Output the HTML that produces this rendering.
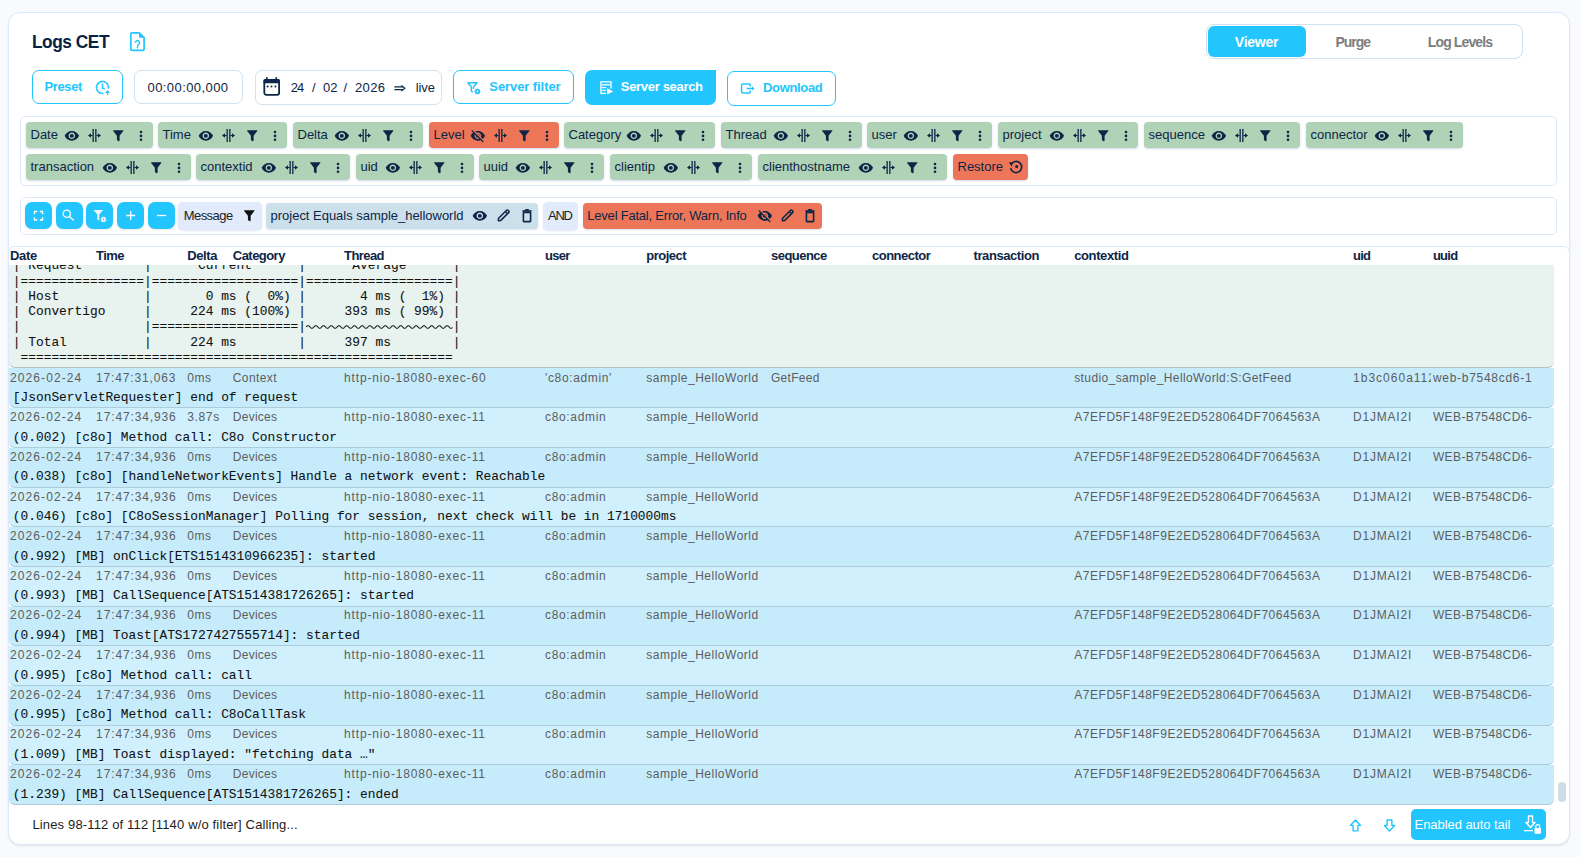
<!DOCTYPE html><html><head><meta charset="utf-8"><style>*{box-sizing:border-box;margin:0;padding:0}html,body{width:1581px;height:857px;overflow:hidden;background:#f9fafd;font-family:"Liberation Sans",sans-serif}svg{display:block}</style></head><body><div style="position:absolute;left:8px;top:12px;width:1562px;height:833px;background:#fff;border:1px solid #dce8fb;border-radius:12px;box-shadow:0 1px 2px rgba(0,0,0,.09)"></div>
<span style="position:absolute;left:31.80px;top:32.42px;font-family:'Liberation Sans',sans-serif;font-weight:bold;font-size:19px;line-height:19px;color:#0b2142;white-space:pre;letter-spacing:-0.500px;transform:scaleX(0.91);transform-origin:0 0;">Logs CET</span>
<svg style="position:absolute;left:129px;top:31px" width="17" height="21" viewBox="0 0 17 21"><path d="M3 1.9h7.3l4.8 4.8V18.1a1.2 1.2 0 0 1-1.2 1.2H3a1.2 1.2 0 0 1-1.2-1.2V3.1A1.2 1.2 0 0 1 3 1.9z" fill="none" stroke="#22c5fd" stroke-width="1.7"/><path d="M10 1.2v4.6a1 1 0 0 0 1 1h4.6z" fill="#22c5fd"/><path d="M6.4 11.7a2.1 2.1 0 1 1 3.3 1.7c-.7.5-1.2 1-1.2 1.9" fill="none" stroke="#22c5fd" stroke-width="1.4"/><circle cx="8.5" cy="16.5" r=".9" fill="#22c5fd"/></svg>
<div style="position:absolute;left:1206px;top:24px;width:317px;height:35px;border:1px solid #cfe1ee;border-radius:8px;background:#fff"></div>
<div style="position:absolute;left:1208px;top:26px;width:98px;height:31px;background:#22c5fd;border-radius:6px"></div>
<span style="position:absolute;left:1234.80px;top:34.75px;font-family:'Liberation Sans',sans-serif;font-weight:bold;font-size:14px;line-height:14px;color:#ffffff;white-space:pre;letter-spacing:-0.245px;">Viewer</span>
<span style="position:absolute;left:1335.40px;top:34.75px;font-family:'Liberation Sans',sans-serif;font-weight:bold;font-size:14px;line-height:14px;color:#7d7d7d;white-space:pre;letter-spacing:-1.022px;">Purge</span>
<span style="position:absolute;left:1427.80px;top:34.75px;font-family:'Liberation Sans',sans-serif;font-weight:bold;font-size:14px;line-height:14px;color:#7d7d7d;white-space:pre;letter-spacing:-0.872px;">Log Levels</span>
<div style="position:absolute;left:32px;top:70px;width:91px;height:34px;border:1.5px solid #22c5fd;border-radius:7px"></div>
<span style="position:absolute;left:44.40px;top:80.00px;font-family:'Liberation Sans',sans-serif;font-weight:bold;font-size:13px;line-height:13px;color:#22c5fd;white-space:pre;letter-spacing:-0.342px;">Preset</span>
<svg style="position:absolute;left:90px;top:75px" width="25" height="25" viewBox="0 0 25 25"><path d="M18.4 13.6A6 6 0 1 0 13.4 18.4" fill="none" stroke="#22c5fd" stroke-width="1.7" stroke-dasharray="3.2 0.3"/><path d="M12.5 9.2V13l1.8 .9" fill="none" stroke="#22c5fd" stroke-width="1.5" stroke-linecap="round"/><path d="M15 17.9L17.5 15.1L20 17.9z" fill="#22c5fd"/><rect x="16.9" y="17" width="1.3" height="3" fill="#22c5fd"/></svg>
<div style="position:absolute;left:134px;top:70px;width:109px;height:34px;border:1px solid #d2e2ee;border-radius:7px"></div>
<span style="position:absolute;left:147.50px;top:81.00px;font-family:'Liberation Sans',sans-serif;font-weight:normal;font-size:13px;line-height:13px;color:#0d2546;white-space:pre;letter-spacing:0.425px;">00:00:00,000</span>
<div style="position:absolute;left:255px;top:70px;width:187px;height:35px;border:1px solid #d2e2ee;border-radius:7px"></div>
<svg style="position:absolute;left:259px;top:74px" width="25" height="25" viewBox="0 0 25 25"><rect x="5.3" y="6" width="14.8" height="14.8" rx="2" fill="none" stroke="#0d2546" stroke-width="1.8"/><rect x="4.4" y="5.1" width="16.5" height="4.2" rx="1.5" fill="#0d2546"/><rect x="6.9" y="3.2" width="1.7" height="3" fill="#0d2546"/><rect x="16.4" y="3.2" width="1.7" height="3" fill="#0d2546"/><circle cx="8.6" cy="12.4" r="1" fill="#0d2546"/><circle cx="12.5" cy="12.4" r="1" fill="#0d2546"/><circle cx="16.4" cy="12.4" r="1" fill="#0d2546"/></svg>
<span style="position:absolute;left:290.70px;top:81.00px;font-family:'Liberation Sans',sans-serif;font-weight:normal;font-size:13px;line-height:13px;color:#0d2546;white-space:pre;letter-spacing:-1.000px;">24</span>
<span style="position:absolute;left:312.00px;top:81.00px;font-family:'Liberation Sans',sans-serif;font-weight:normal;font-size:13px;line-height:13px;color:#0d2546;white-space:pre;">/</span>
<span style="position:absolute;left:323.00px;top:81.00px;font-family:'Liberation Sans',sans-serif;font-weight:normal;font-size:13px;line-height:13px;color:#0d2546;white-space:pre;">02</span>
<span style="position:absolute;left:343.60px;top:81.00px;font-family:'Liberation Sans',sans-serif;font-weight:normal;font-size:13px;line-height:13px;color:#0d2546;white-space:pre;">/</span>
<span style="position:absolute;left:355.00px;top:81.00px;font-family:'Liberation Sans',sans-serif;font-weight:normal;font-size:13px;line-height:13px;color:#0d2546;white-space:pre;letter-spacing:0.333px;">2026</span>
<span style="position:absolute;left:415.70px;top:81.00px;font-family:'Liberation Sans',sans-serif;font-weight:normal;font-size:13px;line-height:13px;color:#0d2546;white-space:pre;letter-spacing:-0.067px;">live</span>
<svg style="position:absolute;left:393px;top:83px" width="13" height="11" viewBox="0 0 13 11"><path d="M1.3 3.9H10M1.3 6.6H10" stroke="#0d2546" stroke-width="1.1"/><path d="M8.4 2.4L11.8 5.25L8.4 8.1" fill="none" stroke="#0d2546" stroke-width="1.15"/></svg>
<div style="position:absolute;left:453px;top:70px;width:121px;height:34px;border:1.5px solid #22c5fd;border-radius:7px"></div>
<svg style="position:absolute;left:462px;top:76px" width="25" height="25" viewBox="0 0 25 25"><path d="M5.6 6.7H15.1L11.5 10.7V12.9M5.6 6.7L9.4 10.7V15.3L10.7 16.4" fill="none" stroke="#22c5fd" stroke-width="1.45" stroke-linejoin="round"/><polygon points="18.80,15.50 17.76,16.44 17.83,17.83 16.44,17.76 15.50,18.80 14.56,17.76 13.17,17.83 13.24,16.44 12.20,15.50 13.24,14.56 13.17,13.17 14.56,13.24 15.50,12.20 16.44,13.24 17.83,13.17 17.76,14.56" fill="#22c5fd"/><circle cx="15.5" cy="15.5" r="2.3" fill="#22c5fd"/><circle cx="15.5" cy="15.5" r=".9" fill="#fff"/></svg>
<span style="position:absolute;left:489.30px;top:79.80px;font-family:'Liberation Sans',sans-serif;font-weight:bold;font-size:13px;line-height:13px;color:#22c5fd;white-space:pre;letter-spacing:-0.081px;">Server filter</span>
<div style="position:absolute;left:585px;top:70px;width:131px;height:35px;background:#22c5fd;border-radius:7px 0 7px 7px"></div>
<svg style="position:absolute;left:594px;top:76px" width="25" height="25" viewBox="0 0 25 25"><path d="M17 12.5V5.9H6.9V17.3H12" fill="none" stroke="#fff" stroke-width="1.3"/><rect x="7.8" y="8" width="8" height="1.6" fill="#d8f3ff"/><rect x="7.8" y="11" width="4.2" height="1.1" fill="#fff"/><rect x="7.8" y="13.8" width="4.2" height="1.1" fill="#fff"/><path d="M13 12.3L19.2 15.4L13 18.6z" fill="#fff"/></svg>
<span style="position:absolute;left:620.80px;top:80.00px;font-family:'Liberation Sans',sans-serif;font-weight:bold;font-size:13px;line-height:13px;color:#ffffff;white-space:pre;letter-spacing:-0.316px;">Server search</span>
<div style="position:absolute;left:727px;top:71px;width:109px;height:35px;border:1.5px solid #22c5fd;border-radius:7px"></div>
<svg style="position:absolute;left:735px;top:76px" width="25" height="25" viewBox="0 0 25 25"><path d="M15.3 10.4V9.2A1.3 1.3 0 0 0 14 7.9H7.9A1.3 1.3 0 0 0 6.6 9.2V15.8A1.3 1.3 0 0 0 7.9 17.1H14A1.3 1.3 0 0 0 15.3 15.8V14.6" fill="none" stroke="#22c5fd" stroke-width="1.5"/><path d="M11.5 12.5H17.5" stroke="#22c5fd" stroke-width="1.5"/><path d="M17 10.6L19.6 12.5L17 14.4z" fill="#22c5fd"/></svg>
<span style="position:absolute;left:763.00px;top:81.00px;font-family:'Liberation Sans',sans-serif;font-weight:bold;font-size:13px;line-height:13px;color:#22c5fd;white-space:pre;letter-spacing:-0.332px;">Download</span>
<div style="position:absolute;left:20px;top:116px;width:1537px;height:70px;border:1px solid #dce8fb;border-radius:5px"></div>
<div style="position:absolute;left:26px;top:122px;width:127px;height:26px;background:#b0d2b6;border-radius:4px;box-shadow:0 1px 2px rgba(130,150,210,.35)"></div>
<span style="position:absolute;left:30.50px;top:128.10px;font-family:'Liberation Sans',sans-serif;font-weight:normal;font-size:13px;line-height:13px;color:#0d2546;white-space:pre;">Date</span>
<svg style="position:absolute;left:64.35px;top:127.85px;overflow:visible" width="15.71" height="15.71" viewBox="0 0 24 24"><path d="M12 4.5C7 4.5 2.73 7.61 1 12c1.73 4.39 6 7.5 11 7.5s9.27-3.11 11-7.5c-1.73-4.39-6-7.5-11-7.5zM12 17c-2.76 0-5-2.24-5-5s2.24-5 5-5 5 2.240 5 5-2.24 5-5 5zm0-8c-1.66 0-3 1.34-3 3s1.34 3 3 3 3-1.34 3-3-1.34-3-3-3z" fill="#0d2546"/></svg>
<svg style="position:absolute;left:88.2px;top:129.2px" width="13" height="13" viewBox="0 0 13 13"><rect x="4.5" y="0" width="1.3" height="13" fill="#0d2546"/><rect x="7.2" y="0" width="1.3" height="13" fill="#0d2546"/><path d="M0 6.5L3 4.3V8.7z M13 6.5L10 4.3V8.7z" fill="#0d2546"/><rect x="2.5" y="5.95" width="2" height="1.1" fill="#0d2546"/><rect x="8.5" y="5.95" width="2" height="1.1" fill="#0d2546"/></svg>
<svg style="position:absolute;left:112.85px;top:130.00px;overflow:visible" width="10.5" height="11.4" viewBox="0 0 10.5 11.4"><path d="M0.3 0.3H10.2Q10.6 0.5 10.3 1L6.6 5.8V10.2Q6.6 11.4 5.6 11.2L4.2 10.2Q3.9 9.8 3.9 9.4V5.8L0.2 1Q-0.1 0.5 0.3 0.3z" fill="#0d2546"/></svg>
<svg style="position:absolute;left:138.7px;top:129.8px" width="4" height="12" viewBox="0 0 4 12"><circle cx="2" cy="2.00" r="1.3" fill="#0d2546"/><circle cx="2" cy="5.90" r="1.3" fill="#0d2546"/><circle cx="2" cy="9.80" r="1.3" fill="#0d2546"/></svg>
<div style="position:absolute;left:158px;top:122px;width:129px;height:26px;background:#b0d2b6;border-radius:4px;box-shadow:0 1px 2px rgba(130,150,210,.35)"></div>
<span style="position:absolute;left:162.50px;top:128.10px;font-family:'Liberation Sans',sans-serif;font-weight:normal;font-size:13px;line-height:13px;color:#0d2546;white-space:pre;">Time</span>
<svg style="position:absolute;left:198.35px;top:127.85px;overflow:visible" width="15.71" height="15.71" viewBox="0 0 24 24"><path d="M12 4.5C7 4.5 2.73 7.61 1 12c1.73 4.39 6 7.5 11 7.5s9.27-3.11 11-7.5c-1.73-4.39-6-7.5-11-7.5zM12 17c-2.76 0-5-2.24-5-5s2.24-5 5-5 5 2.240 5 5-2.24 5-5 5zm0-8c-1.66 0-3 1.34-3 3s1.34 3 3 3 3-1.34 3-3-1.34-3-3-3z" fill="#0d2546"/></svg>
<svg style="position:absolute;left:222.2px;top:129.2px" width="13" height="13" viewBox="0 0 13 13"><rect x="4.5" y="0" width="1.3" height="13" fill="#0d2546"/><rect x="7.2" y="0" width="1.3" height="13" fill="#0d2546"/><path d="M0 6.5L3 4.3V8.7z M13 6.5L10 4.3V8.7z" fill="#0d2546"/><rect x="2.5" y="5.95" width="2" height="1.1" fill="#0d2546"/><rect x="8.5" y="5.95" width="2" height="1.1" fill="#0d2546"/></svg>
<svg style="position:absolute;left:246.85px;top:130.00px;overflow:visible" width="10.5" height="11.4" viewBox="0 0 10.5 11.4"><path d="M0.3 0.3H10.2Q10.6 0.5 10.3 1L6.6 5.8V10.2Q6.6 11.4 5.6 11.2L4.2 10.2Q3.9 9.8 3.9 9.4V5.8L0.2 1Q-0.1 0.5 0.3 0.3z" fill="#0d2546"/></svg>
<svg style="position:absolute;left:272.7px;top:129.8px" width="4" height="12" viewBox="0 0 4 12"><circle cx="2" cy="2.00" r="1.3" fill="#0d2546"/><circle cx="2" cy="5.90" r="1.3" fill="#0d2546"/><circle cx="2" cy="9.80" r="1.3" fill="#0d2546"/></svg>
<div style="position:absolute;left:293px;top:122px;width:130px;height:26px;background:#b0d2b6;border-radius:4px;box-shadow:0 1px 2px rgba(130,150,210,.35)"></div>
<span style="position:absolute;left:297.50px;top:128.10px;font-family:'Liberation Sans',sans-serif;font-weight:normal;font-size:13px;line-height:13px;color:#0d2546;white-space:pre;">Delta</span>
<svg style="position:absolute;left:334.35px;top:127.85px;overflow:visible" width="15.71" height="15.71" viewBox="0 0 24 24"><path d="M12 4.5C7 4.5 2.73 7.61 1 12c1.73 4.39 6 7.5 11 7.5s9.27-3.11 11-7.5c-1.73-4.39-6-7.5-11-7.5zM12 17c-2.76 0-5-2.24-5-5s2.24-5 5-5 5 2.240 5 5-2.24 5-5 5zm0-8c-1.66 0-3 1.34-3 3s1.34 3 3 3 3-1.34 3-3-1.34-3-3-3z" fill="#0d2546"/></svg>
<svg style="position:absolute;left:358.2px;top:129.2px" width="13" height="13" viewBox="0 0 13 13"><rect x="4.5" y="0" width="1.3" height="13" fill="#0d2546"/><rect x="7.2" y="0" width="1.3" height="13" fill="#0d2546"/><path d="M0 6.5L3 4.3V8.7z M13 6.5L10 4.3V8.7z" fill="#0d2546"/><rect x="2.5" y="5.95" width="2" height="1.1" fill="#0d2546"/><rect x="8.5" y="5.95" width="2" height="1.1" fill="#0d2546"/></svg>
<svg style="position:absolute;left:382.85px;top:130.00px;overflow:visible" width="10.5" height="11.4" viewBox="0 0 10.5 11.4"><path d="M0.3 0.3H10.2Q10.6 0.5 10.3 1L6.6 5.8V10.2Q6.6 11.4 5.6 11.2L4.2 10.2Q3.9 9.8 3.9 9.4V5.8L0.2 1Q-0.1 0.5 0.3 0.3z" fill="#0d2546"/></svg>
<svg style="position:absolute;left:408.7px;top:129.8px" width="4" height="12" viewBox="0 0 4 12"><circle cx="2" cy="2.00" r="1.3" fill="#0d2546"/><circle cx="2" cy="5.90" r="1.3" fill="#0d2546"/><circle cx="2" cy="9.80" r="1.3" fill="#0d2546"/></svg>
<div style="position:absolute;left:429px;top:122px;width:130px;height:26px;background:#ec7657;border-radius:4px;box-shadow:0 1px 2px rgba(130,150,210,.35)"></div>
<span style="position:absolute;left:433.50px;top:128.10px;font-family:'Liberation Sans',sans-serif;font-weight:normal;font-size:13px;line-height:13px;color:#0d2546;white-space:pre;">Level</span>
<svg style="position:absolute;left:470.35px;top:127.85px;overflow:visible" width="15.71" height="15.71" viewBox="0 0 24 24"><path d="M12 7c2.76 0 5 2.24 5 5 0 .65-.13 1.26-.36 1.83l2.92 2.92c1.51-1.26 2.7-2.89 3.43-4.75-1.73-4.39-6-7.5-11-7.5-1.4 0-2.74.25-3.98.7l2.16 2.16C10.74 7.13 11.35 7 12 7zM2 4.27l2.28 2.28.46.46C3.08 8.3 1.78 10.02 1 12c1.73 4.39 6 7.5 11 7.5 1.55 0 3.03-.3 4.38-.84l.42.42L19.73 22 21 20.73 3.27 3 2 4.27zM7.53 9.8l1.55 1.55c-.05.21-.08.43-.08.65 0 1.66 1.34 3 3 3 .22 0 .44-.03.65-.08l1.55 1.55c-.67.33-1.41.53-2.2.53-2.76 0-5-2.24-5-5 0-.79.2-1.53.53-2.2zm4.31-.78l3.15 3.15.02-.16c0-1.66-1.34-3-3-3l-.17.01z" fill="#0d2546"/></svg>
<svg style="position:absolute;left:494.2px;top:129.2px" width="13" height="13" viewBox="0 0 13 13"><rect x="4.5" y="0" width="1.3" height="13" fill="#0d2546"/><rect x="7.2" y="0" width="1.3" height="13" fill="#0d2546"/><path d="M0 6.5L3 4.3V8.7z M13 6.5L10 4.3V8.7z" fill="#0d2546"/><rect x="2.5" y="5.95" width="2" height="1.1" fill="#0d2546"/><rect x="8.5" y="5.95" width="2" height="1.1" fill="#0d2546"/></svg>
<svg style="position:absolute;left:518.85px;top:130.00px;overflow:visible" width="10.5" height="11.4" viewBox="0 0 10.5 11.4"><path d="M0.3 0.3H10.2Q10.6 0.5 10.3 1L6.6 5.8V10.2Q6.6 11.4 5.6 11.2L4.2 10.2Q3.9 9.8 3.9 9.4V5.8L0.2 1Q-0.1 0.5 0.3 0.3z" fill="#0d2546"/></svg>
<svg style="position:absolute;left:544.7px;top:129.8px" width="4" height="12" viewBox="0 0 4 12"><circle cx="2" cy="2.00" r="1.3" fill="#0d2546"/><circle cx="2" cy="5.90" r="1.3" fill="#0d2546"/><circle cx="2" cy="9.80" r="1.3" fill="#0d2546"/></svg>
<div style="position:absolute;left:564px;top:122px;width:151px;height:26px;background:#b0d2b6;border-radius:4px;box-shadow:0 1px 2px rgba(130,150,210,.35)"></div>
<span style="position:absolute;left:568.50px;top:128.10px;font-family:'Liberation Sans',sans-serif;font-weight:normal;font-size:13px;line-height:13px;color:#0d2546;white-space:pre;">Category</span>
<svg style="position:absolute;left:626.35px;top:127.85px;overflow:visible" width="15.71" height="15.71" viewBox="0 0 24 24"><path d="M12 4.5C7 4.5 2.73 7.61 1 12c1.73 4.39 6 7.5 11 7.5s9.27-3.11 11-7.5c-1.73-4.39-6-7.5-11-7.5zM12 17c-2.76 0-5-2.24-5-5s2.24-5 5-5 5 2.240 5 5-2.24 5-5 5zm0-8c-1.66 0-3 1.34-3 3s1.34 3 3 3 3-1.34 3-3-1.34-3-3-3z" fill="#0d2546"/></svg>
<svg style="position:absolute;left:650.2px;top:129.2px" width="13" height="13" viewBox="0 0 13 13"><rect x="4.5" y="0" width="1.3" height="13" fill="#0d2546"/><rect x="7.2" y="0" width="1.3" height="13" fill="#0d2546"/><path d="M0 6.5L3 4.3V8.7z M13 6.5L10 4.3V8.7z" fill="#0d2546"/><rect x="2.5" y="5.95" width="2" height="1.1" fill="#0d2546"/><rect x="8.5" y="5.95" width="2" height="1.1" fill="#0d2546"/></svg>
<svg style="position:absolute;left:674.85px;top:130.00px;overflow:visible" width="10.5" height="11.4" viewBox="0 0 10.5 11.4"><path d="M0.3 0.3H10.2Q10.6 0.5 10.3 1L6.6 5.8V10.2Q6.6 11.4 5.6 11.2L4.2 10.2Q3.9 9.8 3.9 9.4V5.8L0.2 1Q-0.1 0.5 0.3 0.3z" fill="#0d2546"/></svg>
<svg style="position:absolute;left:700.7px;top:129.8px" width="4" height="12" viewBox="0 0 4 12"><circle cx="2" cy="2.00" r="1.3" fill="#0d2546"/><circle cx="2" cy="5.90" r="1.3" fill="#0d2546"/><circle cx="2" cy="9.80" r="1.3" fill="#0d2546"/></svg>
<div style="position:absolute;left:721px;top:122px;width:141px;height:26px;background:#b0d2b6;border-radius:4px;box-shadow:0 1px 2px rgba(130,150,210,.35)"></div>
<span style="position:absolute;left:725.50px;top:128.10px;font-family:'Liberation Sans',sans-serif;font-weight:normal;font-size:13px;line-height:13px;color:#0d2546;white-space:pre;">Thread</span>
<svg style="position:absolute;left:773.35px;top:127.85px;overflow:visible" width="15.71" height="15.71" viewBox="0 0 24 24"><path d="M12 4.5C7 4.5 2.73 7.61 1 12c1.73 4.39 6 7.5 11 7.5s9.27-3.11 11-7.5c-1.73-4.39-6-7.5-11-7.5zM12 17c-2.76 0-5-2.24-5-5s2.24-5 5-5 5 2.240 5 5-2.24 5-5 5zm0-8c-1.66 0-3 1.34-3 3s1.34 3 3 3 3-1.34 3-3-1.34-3-3-3z" fill="#0d2546"/></svg>
<svg style="position:absolute;left:797.2px;top:129.2px" width="13" height="13" viewBox="0 0 13 13"><rect x="4.5" y="0" width="1.3" height="13" fill="#0d2546"/><rect x="7.2" y="0" width="1.3" height="13" fill="#0d2546"/><path d="M0 6.5L3 4.3V8.7z M13 6.5L10 4.3V8.7z" fill="#0d2546"/><rect x="2.5" y="5.95" width="2" height="1.1" fill="#0d2546"/><rect x="8.5" y="5.95" width="2" height="1.1" fill="#0d2546"/></svg>
<svg style="position:absolute;left:821.85px;top:130.00px;overflow:visible" width="10.5" height="11.4" viewBox="0 0 10.5 11.4"><path d="M0.3 0.3H10.2Q10.6 0.5 10.3 1L6.6 5.8V10.2Q6.6 11.4 5.6 11.2L4.2 10.2Q3.9 9.8 3.9 9.4V5.8L0.2 1Q-0.1 0.5 0.3 0.3z" fill="#0d2546"/></svg>
<svg style="position:absolute;left:847.7px;top:129.8px" width="4" height="12" viewBox="0 0 4 12"><circle cx="2" cy="2.00" r="1.3" fill="#0d2546"/><circle cx="2" cy="5.90" r="1.3" fill="#0d2546"/><circle cx="2" cy="9.80" r="1.3" fill="#0d2546"/></svg>
<div style="position:absolute;left:867px;top:122px;width:125px;height:26px;background:#b0d2b6;border-radius:4px;box-shadow:0 1px 2px rgba(130,150,210,.35)"></div>
<span style="position:absolute;left:871.50px;top:128.10px;font-family:'Liberation Sans',sans-serif;font-weight:normal;font-size:13px;line-height:13px;color:#0d2546;white-space:pre;">user</span>
<svg style="position:absolute;left:903.35px;top:127.85px;overflow:visible" width="15.71" height="15.71" viewBox="0 0 24 24"><path d="M12 4.5C7 4.5 2.73 7.61 1 12c1.73 4.39 6 7.5 11 7.5s9.27-3.11 11-7.5c-1.73-4.39-6-7.5-11-7.5zM12 17c-2.76 0-5-2.24-5-5s2.24-5 5-5 5 2.240 5 5-2.24 5-5 5zm0-8c-1.66 0-3 1.34-3 3s1.34 3 3 3 3-1.34 3-3-1.34-3-3-3z" fill="#0d2546"/></svg>
<svg style="position:absolute;left:927.2px;top:129.2px" width="13" height="13" viewBox="0 0 13 13"><rect x="4.5" y="0" width="1.3" height="13" fill="#0d2546"/><rect x="7.2" y="0" width="1.3" height="13" fill="#0d2546"/><path d="M0 6.5L3 4.3V8.7z M13 6.5L10 4.3V8.7z" fill="#0d2546"/><rect x="2.5" y="5.95" width="2" height="1.1" fill="#0d2546"/><rect x="8.5" y="5.95" width="2" height="1.1" fill="#0d2546"/></svg>
<svg style="position:absolute;left:951.85px;top:130.00px;overflow:visible" width="10.5" height="11.4" viewBox="0 0 10.5 11.4"><path d="M0.3 0.3H10.2Q10.6 0.5 10.3 1L6.6 5.8V10.2Q6.6 11.4 5.6 11.2L4.2 10.2Q3.9 9.8 3.9 9.4V5.8L0.2 1Q-0.1 0.5 0.3 0.3z" fill="#0d2546"/></svg>
<svg style="position:absolute;left:977.7px;top:129.8px" width="4" height="12" viewBox="0 0 4 12"><circle cx="2" cy="2.00" r="1.3" fill="#0d2546"/><circle cx="2" cy="5.90" r="1.3" fill="#0d2546"/><circle cx="2" cy="9.80" r="1.3" fill="#0d2546"/></svg>
<div style="position:absolute;left:998px;top:122px;width:140px;height:26px;background:#b0d2b6;border-radius:4px;box-shadow:0 1px 2px rgba(130,150,210,.35)"></div>
<span style="position:absolute;left:1002.50px;top:128.10px;font-family:'Liberation Sans',sans-serif;font-weight:normal;font-size:13px;line-height:13px;color:#0d2546;white-space:pre;">project</span>
<svg style="position:absolute;left:1049.35px;top:127.85px;overflow:visible" width="15.71" height="15.71" viewBox="0 0 24 24"><path d="M12 4.5C7 4.5 2.73 7.61 1 12c1.73 4.39 6 7.5 11 7.5s9.27-3.11 11-7.5c-1.73-4.39-6-7.5-11-7.5zM12 17c-2.76 0-5-2.24-5-5s2.24-5 5-5 5 2.240 5 5-2.24 5-5 5zm0-8c-1.66 0-3 1.34-3 3s1.34 3 3 3 3-1.34 3-3-1.34-3-3-3z" fill="#0d2546"/></svg>
<svg style="position:absolute;left:1073.2px;top:129.2px" width="13" height="13" viewBox="0 0 13 13"><rect x="4.5" y="0" width="1.3" height="13" fill="#0d2546"/><rect x="7.2" y="0" width="1.3" height="13" fill="#0d2546"/><path d="M0 6.5L3 4.3V8.7z M13 6.5L10 4.3V8.7z" fill="#0d2546"/><rect x="2.5" y="5.95" width="2" height="1.1" fill="#0d2546"/><rect x="8.5" y="5.95" width="2" height="1.1" fill="#0d2546"/></svg>
<svg style="position:absolute;left:1097.85px;top:130.00px;overflow:visible" width="10.5" height="11.4" viewBox="0 0 10.5 11.4"><path d="M0.3 0.3H10.2Q10.6 0.5 10.3 1L6.6 5.8V10.2Q6.6 11.4 5.6 11.2L4.2 10.2Q3.9 9.8 3.9 9.4V5.8L0.2 1Q-0.1 0.5 0.3 0.3z" fill="#0d2546"/></svg>
<svg style="position:absolute;left:1123.7px;top:129.8px" width="4" height="12" viewBox="0 0 4 12"><circle cx="2" cy="2.00" r="1.3" fill="#0d2546"/><circle cx="2" cy="5.90" r="1.3" fill="#0d2546"/><circle cx="2" cy="9.80" r="1.3" fill="#0d2546"/></svg>
<div style="position:absolute;left:1144px;top:122px;width:156px;height:26px;background:#b0d2b6;border-radius:4px;box-shadow:0 1px 2px rgba(130,150,210,.35)"></div>
<span style="position:absolute;left:1148.50px;top:128.10px;font-family:'Liberation Sans',sans-serif;font-weight:normal;font-size:13px;line-height:13px;color:#0d2546;white-space:pre;">sequence</span>
<svg style="position:absolute;left:1211.35px;top:127.85px;overflow:visible" width="15.71" height="15.71" viewBox="0 0 24 24"><path d="M12 4.5C7 4.5 2.73 7.61 1 12c1.73 4.39 6 7.5 11 7.5s9.27-3.11 11-7.5c-1.73-4.39-6-7.5-11-7.5zM12 17c-2.76 0-5-2.24-5-5s2.24-5 5-5 5 2.240 5 5-2.24 5-5 5zm0-8c-1.66 0-3 1.34-3 3s1.34 3 3 3 3-1.34 3-3-1.34-3-3-3z" fill="#0d2546"/></svg>
<svg style="position:absolute;left:1235.2px;top:129.2px" width="13" height="13" viewBox="0 0 13 13"><rect x="4.5" y="0" width="1.3" height="13" fill="#0d2546"/><rect x="7.2" y="0" width="1.3" height="13" fill="#0d2546"/><path d="M0 6.5L3 4.3V8.7z M13 6.5L10 4.3V8.7z" fill="#0d2546"/><rect x="2.5" y="5.95" width="2" height="1.1" fill="#0d2546"/><rect x="8.5" y="5.95" width="2" height="1.1" fill="#0d2546"/></svg>
<svg style="position:absolute;left:1259.85px;top:130.00px;overflow:visible" width="10.5" height="11.4" viewBox="0 0 10.5 11.4"><path d="M0.3 0.3H10.2Q10.6 0.5 10.3 1L6.6 5.8V10.2Q6.6 11.4 5.6 11.2L4.2 10.2Q3.9 9.8 3.9 9.4V5.8L0.2 1Q-0.1 0.5 0.3 0.3z" fill="#0d2546"/></svg>
<svg style="position:absolute;left:1285.7px;top:129.8px" width="4" height="12" viewBox="0 0 4 12"><circle cx="2" cy="2.00" r="1.3" fill="#0d2546"/><circle cx="2" cy="5.90" r="1.3" fill="#0d2546"/><circle cx="2" cy="9.80" r="1.3" fill="#0d2546"/></svg>
<div style="position:absolute;left:1306px;top:122px;width:157px;height:26px;background:#b0d2b6;border-radius:4px;box-shadow:0 1px 2px rgba(130,150,210,.35)"></div>
<span style="position:absolute;left:1310.50px;top:128.10px;font-family:'Liberation Sans',sans-serif;font-weight:normal;font-size:13px;line-height:13px;color:#0d2546;white-space:pre;">connector</span>
<svg style="position:absolute;left:1374.35px;top:127.85px;overflow:visible" width="15.71" height="15.71" viewBox="0 0 24 24"><path d="M12 4.5C7 4.5 2.73 7.61 1 12c1.73 4.39 6 7.5 11 7.5s9.27-3.11 11-7.5c-1.73-4.39-6-7.5-11-7.5zM12 17c-2.76 0-5-2.24-5-5s2.24-5 5-5 5 2.240 5 5-2.24 5-5 5zm0-8c-1.66 0-3 1.34-3 3s1.34 3 3 3 3-1.34 3-3-1.34-3-3-3z" fill="#0d2546"/></svg>
<svg style="position:absolute;left:1398.2px;top:129.2px" width="13" height="13" viewBox="0 0 13 13"><rect x="4.5" y="0" width="1.3" height="13" fill="#0d2546"/><rect x="7.2" y="0" width="1.3" height="13" fill="#0d2546"/><path d="M0 6.5L3 4.3V8.7z M13 6.5L10 4.3V8.7z" fill="#0d2546"/><rect x="2.5" y="5.95" width="2" height="1.1" fill="#0d2546"/><rect x="8.5" y="5.95" width="2" height="1.1" fill="#0d2546"/></svg>
<svg style="position:absolute;left:1422.85px;top:130.00px;overflow:visible" width="10.5" height="11.4" viewBox="0 0 10.5 11.4"><path d="M0.3 0.3H10.2Q10.6 0.5 10.3 1L6.6 5.8V10.2Q6.6 11.4 5.6 11.2L4.2 10.2Q3.9 9.8 3.9 9.4V5.8L0.2 1Q-0.1 0.5 0.3 0.3z" fill="#0d2546"/></svg>
<svg style="position:absolute;left:1448.7px;top:129.8px" width="4" height="12" viewBox="0 0 4 12"><circle cx="2" cy="2.00" r="1.3" fill="#0d2546"/><circle cx="2" cy="5.90" r="1.3" fill="#0d2546"/><circle cx="2" cy="9.80" r="1.3" fill="#0d2546"/></svg>
<div style="position:absolute;left:26px;top:154px;width:165px;height:26px;background:#b0d2b6;border-radius:4px;box-shadow:0 1px 2px rgba(130,150,210,.35)"></div>
<span style="position:absolute;left:30.50px;top:160.10px;font-family:'Liberation Sans',sans-serif;font-weight:normal;font-size:13px;line-height:13px;color:#0d2546;white-space:pre;">transaction</span>
<svg style="position:absolute;left:102.35px;top:159.85px;overflow:visible" width="15.71" height="15.71" viewBox="0 0 24 24"><path d="M12 4.5C7 4.5 2.73 7.61 1 12c1.73 4.39 6 7.5 11 7.5s9.27-3.11 11-7.5c-1.73-4.39-6-7.5-11-7.5zM12 17c-2.76 0-5-2.24-5-5s2.24-5 5-5 5 2.240 5 5-2.24 5-5 5zm0-8c-1.66 0-3 1.34-3 3s1.34 3 3 3 3-1.34 3-3-1.34-3-3-3z" fill="#0d2546"/></svg>
<svg style="position:absolute;left:126.2px;top:161.2px" width="13" height="13" viewBox="0 0 13 13"><rect x="4.5" y="0" width="1.3" height="13" fill="#0d2546"/><rect x="7.2" y="0" width="1.3" height="13" fill="#0d2546"/><path d="M0 6.5L3 4.3V8.7z M13 6.5L10 4.3V8.7z" fill="#0d2546"/><rect x="2.5" y="5.95" width="2" height="1.1" fill="#0d2546"/><rect x="8.5" y="5.95" width="2" height="1.1" fill="#0d2546"/></svg>
<svg style="position:absolute;left:150.85px;top:162.00px;overflow:visible" width="10.5" height="11.4" viewBox="0 0 10.5 11.4"><path d="M0.3 0.3H10.2Q10.6 0.5 10.3 1L6.6 5.8V10.2Q6.6 11.4 5.6 11.2L4.2 10.2Q3.9 9.8 3.9 9.4V5.8L0.2 1Q-0.1 0.5 0.3 0.3z" fill="#0d2546"/></svg>
<svg style="position:absolute;left:176.7px;top:161.8px" width="4" height="12" viewBox="0 0 4 12"><circle cx="2" cy="2.00" r="1.3" fill="#0d2546"/><circle cx="2" cy="5.90" r="1.3" fill="#0d2546"/><circle cx="2" cy="9.80" r="1.3" fill="#0d2546"/></svg>
<div style="position:absolute;left:196px;top:154px;width:154px;height:26px;background:#b0d2b6;border-radius:4px;box-shadow:0 1px 2px rgba(130,150,210,.35)"></div>
<span style="position:absolute;left:200.50px;top:160.10px;font-family:'Liberation Sans',sans-serif;font-weight:normal;font-size:13px;line-height:13px;color:#0d2546;white-space:pre;">contextid</span>
<svg style="position:absolute;left:261.35px;top:159.85px;overflow:visible" width="15.71" height="15.71" viewBox="0 0 24 24"><path d="M12 4.5C7 4.5 2.73 7.61 1 12c1.73 4.39 6 7.5 11 7.5s9.27-3.11 11-7.5c-1.73-4.39-6-7.5-11-7.5zM12 17c-2.76 0-5-2.24-5-5s2.24-5 5-5 5 2.240 5 5-2.24 5-5 5zm0-8c-1.66 0-3 1.34-3 3s1.34 3 3 3 3-1.34 3-3-1.34-3-3-3z" fill="#0d2546"/></svg>
<svg style="position:absolute;left:285.2px;top:161.2px" width="13" height="13" viewBox="0 0 13 13"><rect x="4.5" y="0" width="1.3" height="13" fill="#0d2546"/><rect x="7.2" y="0" width="1.3" height="13" fill="#0d2546"/><path d="M0 6.5L3 4.3V8.7z M13 6.5L10 4.3V8.7z" fill="#0d2546"/><rect x="2.5" y="5.95" width="2" height="1.1" fill="#0d2546"/><rect x="8.5" y="5.95" width="2" height="1.1" fill="#0d2546"/></svg>
<svg style="position:absolute;left:309.85px;top:162.00px;overflow:visible" width="10.5" height="11.4" viewBox="0 0 10.5 11.4"><path d="M0.3 0.3H10.2Q10.6 0.5 10.3 1L6.6 5.8V10.2Q6.6 11.4 5.6 11.2L4.2 10.2Q3.9 9.8 3.9 9.4V5.8L0.2 1Q-0.1 0.5 0.3 0.3z" fill="#0d2546"/></svg>
<svg style="position:absolute;left:335.7px;top:161.8px" width="4" height="12" viewBox="0 0 4 12"><circle cx="2" cy="2.00" r="1.3" fill="#0d2546"/><circle cx="2" cy="5.90" r="1.3" fill="#0d2546"/><circle cx="2" cy="9.80" r="1.3" fill="#0d2546"/></svg>
<div style="position:absolute;left:356px;top:154px;width:118px;height:26px;background:#b0d2b6;border-radius:4px;box-shadow:0 1px 2px rgba(130,150,210,.35)"></div>
<span style="position:absolute;left:360.50px;top:160.10px;font-family:'Liberation Sans',sans-serif;font-weight:normal;font-size:13px;line-height:13px;color:#0d2546;white-space:pre;">uid</span>
<svg style="position:absolute;left:385.35px;top:159.85px;overflow:visible" width="15.71" height="15.71" viewBox="0 0 24 24"><path d="M12 4.5C7 4.5 2.73 7.61 1 12c1.73 4.39 6 7.5 11 7.5s9.27-3.11 11-7.5c-1.73-4.39-6-7.5-11-7.5zM12 17c-2.76 0-5-2.24-5-5s2.24-5 5-5 5 2.240 5 5-2.24 5-5 5zm0-8c-1.66 0-3 1.34-3 3s1.34 3 3 3 3-1.34 3-3-1.34-3-3-3z" fill="#0d2546"/></svg>
<svg style="position:absolute;left:409.2px;top:161.2px" width="13" height="13" viewBox="0 0 13 13"><rect x="4.5" y="0" width="1.3" height="13" fill="#0d2546"/><rect x="7.2" y="0" width="1.3" height="13" fill="#0d2546"/><path d="M0 6.5L3 4.3V8.7z M13 6.5L10 4.3V8.7z" fill="#0d2546"/><rect x="2.5" y="5.95" width="2" height="1.1" fill="#0d2546"/><rect x="8.5" y="5.95" width="2" height="1.1" fill="#0d2546"/></svg>
<svg style="position:absolute;left:433.85px;top:162.00px;overflow:visible" width="10.5" height="11.4" viewBox="0 0 10.5 11.4"><path d="M0.3 0.3H10.2Q10.6 0.5 10.3 1L6.6 5.8V10.2Q6.6 11.4 5.6 11.2L4.2 10.2Q3.9 9.8 3.9 9.4V5.8L0.2 1Q-0.1 0.5 0.3 0.3z" fill="#0d2546"/></svg>
<svg style="position:absolute;left:459.7px;top:161.8px" width="4" height="12" viewBox="0 0 4 12"><circle cx="2" cy="2.00" r="1.3" fill="#0d2546"/><circle cx="2" cy="5.90" r="1.3" fill="#0d2546"/><circle cx="2" cy="9.80" r="1.3" fill="#0d2546"/></svg>
<div style="position:absolute;left:479px;top:154px;width:125px;height:26px;background:#b0d2b6;border-radius:4px;box-shadow:0 1px 2px rgba(130,150,210,.35)"></div>
<span style="position:absolute;left:483.50px;top:160.10px;font-family:'Liberation Sans',sans-serif;font-weight:normal;font-size:13px;line-height:13px;color:#0d2546;white-space:pre;">uuid</span>
<svg style="position:absolute;left:515.35px;top:159.85px;overflow:visible" width="15.71" height="15.71" viewBox="0 0 24 24"><path d="M12 4.5C7 4.5 2.73 7.61 1 12c1.73 4.39 6 7.5 11 7.5s9.27-3.11 11-7.5c-1.73-4.39-6-7.5-11-7.5zM12 17c-2.76 0-5-2.24-5-5s2.24-5 5-5 5 2.240 5 5-2.24 5-5 5zm0-8c-1.66 0-3 1.34-3 3s1.34 3 3 3 3-1.34 3-3-1.34-3-3-3z" fill="#0d2546"/></svg>
<svg style="position:absolute;left:539.2px;top:161.2px" width="13" height="13" viewBox="0 0 13 13"><rect x="4.5" y="0" width="1.3" height="13" fill="#0d2546"/><rect x="7.2" y="0" width="1.3" height="13" fill="#0d2546"/><path d="M0 6.5L3 4.3V8.7z M13 6.5L10 4.3V8.7z" fill="#0d2546"/><rect x="2.5" y="5.95" width="2" height="1.1" fill="#0d2546"/><rect x="8.5" y="5.95" width="2" height="1.1" fill="#0d2546"/></svg>
<svg style="position:absolute;left:563.85px;top:162.00px;overflow:visible" width="10.5" height="11.4" viewBox="0 0 10.5 11.4"><path d="M0.3 0.3H10.2Q10.6 0.5 10.3 1L6.6 5.8V10.2Q6.6 11.4 5.6 11.2L4.2 10.2Q3.9 9.8 3.9 9.4V5.8L0.2 1Q-0.1 0.5 0.3 0.3z" fill="#0d2546"/></svg>
<svg style="position:absolute;left:589.7px;top:161.8px" width="4" height="12" viewBox="0 0 4 12"><circle cx="2" cy="2.00" r="1.3" fill="#0d2546"/><circle cx="2" cy="5.90" r="1.3" fill="#0d2546"/><circle cx="2" cy="9.80" r="1.3" fill="#0d2546"/></svg>
<div style="position:absolute;left:610px;top:154px;width:142px;height:26px;background:#b0d2b6;border-radius:4px;box-shadow:0 1px 2px rgba(130,150,210,.35)"></div>
<span style="position:absolute;left:614.50px;top:160.10px;font-family:'Liberation Sans',sans-serif;font-weight:normal;font-size:13px;line-height:13px;color:#0d2546;white-space:pre;">clientip</span>
<svg style="position:absolute;left:663.35px;top:159.85px;overflow:visible" width="15.71" height="15.71" viewBox="0 0 24 24"><path d="M12 4.5C7 4.5 2.73 7.61 1 12c1.73 4.39 6 7.5 11 7.5s9.27-3.11 11-7.5c-1.73-4.39-6-7.5-11-7.5zM12 17c-2.76 0-5-2.24-5-5s2.24-5 5-5 5 2.240 5 5-2.24 5-5 5zm0-8c-1.66 0-3 1.34-3 3s1.34 3 3 3 3-1.34 3-3-1.34-3-3-3z" fill="#0d2546"/></svg>
<svg style="position:absolute;left:687.2px;top:161.2px" width="13" height="13" viewBox="0 0 13 13"><rect x="4.5" y="0" width="1.3" height="13" fill="#0d2546"/><rect x="7.2" y="0" width="1.3" height="13" fill="#0d2546"/><path d="M0 6.5L3 4.3V8.7z M13 6.5L10 4.3V8.7z" fill="#0d2546"/><rect x="2.5" y="5.95" width="2" height="1.1" fill="#0d2546"/><rect x="8.5" y="5.95" width="2" height="1.1" fill="#0d2546"/></svg>
<svg style="position:absolute;left:711.85px;top:162.00px;overflow:visible" width="10.5" height="11.4" viewBox="0 0 10.5 11.4"><path d="M0.3 0.3H10.2Q10.6 0.5 10.3 1L6.6 5.8V10.2Q6.6 11.4 5.6 11.2L4.2 10.2Q3.9 9.8 3.9 9.4V5.8L0.2 1Q-0.1 0.5 0.3 0.3z" fill="#0d2546"/></svg>
<svg style="position:absolute;left:737.7px;top:161.8px" width="4" height="12" viewBox="0 0 4 12"><circle cx="2" cy="2.00" r="1.3" fill="#0d2546"/><circle cx="2" cy="5.90" r="1.3" fill="#0d2546"/><circle cx="2" cy="9.80" r="1.3" fill="#0d2546"/></svg>
<div style="position:absolute;left:758px;top:154px;width:189px;height:26px;background:#b0d2b6;border-radius:4px;box-shadow:0 1px 2px rgba(130,150,210,.35)"></div>
<span style="position:absolute;left:762.50px;top:160.10px;font-family:'Liberation Sans',sans-serif;font-weight:normal;font-size:13px;line-height:13px;color:#0d2546;white-space:pre;">clienthostname</span>
<svg style="position:absolute;left:858.35px;top:159.85px;overflow:visible" width="15.71" height="15.71" viewBox="0 0 24 24"><path d="M12 4.5C7 4.5 2.73 7.61 1 12c1.73 4.39 6 7.5 11 7.5s9.27-3.11 11-7.5c-1.73-4.39-6-7.5-11-7.5zM12 17c-2.76 0-5-2.24-5-5s2.24-5 5-5 5 2.240 5 5-2.24 5-5 5zm0-8c-1.66 0-3 1.34-3 3s1.34 3 3 3 3-1.34 3-3-1.34-3-3-3z" fill="#0d2546"/></svg>
<svg style="position:absolute;left:882.2px;top:161.2px" width="13" height="13" viewBox="0 0 13 13"><rect x="4.5" y="0" width="1.3" height="13" fill="#0d2546"/><rect x="7.2" y="0" width="1.3" height="13" fill="#0d2546"/><path d="M0 6.5L3 4.3V8.7z M13 6.5L10 4.3V8.7z" fill="#0d2546"/><rect x="2.5" y="5.95" width="2" height="1.1" fill="#0d2546"/><rect x="8.5" y="5.95" width="2" height="1.1" fill="#0d2546"/></svg>
<svg style="position:absolute;left:906.85px;top:162.00px;overflow:visible" width="10.5" height="11.4" viewBox="0 0 10.5 11.4"><path d="M0.3 0.3H10.2Q10.6 0.5 10.3 1L6.6 5.8V10.2Q6.6 11.4 5.6 11.2L4.2 10.2Q3.9 9.8 3.9 9.4V5.8L0.2 1Q-0.1 0.5 0.3 0.3z" fill="#0d2546"/></svg>
<svg style="position:absolute;left:932.7px;top:161.8px" width="4" height="12" viewBox="0 0 4 12"><circle cx="2" cy="2.00" r="1.3" fill="#0d2546"/><circle cx="2" cy="5.90" r="1.3" fill="#0d2546"/><circle cx="2" cy="9.80" r="1.3" fill="#0d2546"/></svg>
<div style="position:absolute;left:953px;top:154px;width:75px;height:26px;background:#ec7657;border-radius:4px;box-shadow:0 1px 2px rgba(130,150,210,.35)"></div>
<span style="position:absolute;left:957.50px;top:160.10px;font-family:'Liberation Sans',sans-serif;font-weight:normal;font-size:13px;line-height:13px;color:#0d2546;white-space:pre;">Restore</span>
<svg style="position:absolute;left:1008px;top:159px" width="16" height="15" viewBox="0 0 16 15"><path d="M3.2 5.2A5.6 5.6 0 1 1 2.6 9.3" fill="none" stroke="#0d2546" stroke-width="1.6"/><path d="M0.8 3.2L5.2 3.4L3.6 7.4z" fill="#0d2546"/><circle cx="8.6" cy="7.5" r="1.5" fill="#0d2546"/></svg>
<div style="position:absolute;left:20px;top:197px;width:1537px;height:38px;border:1px solid #dce8fb;border-radius:5px"></div>
<div style="position:absolute;left:25px;top:202px;width:27px;height:27px;background:#22c5fd;border-radius:7px;box-shadow:0 1px 2px rgba(200,150,120,.25)"></div>
<div style="position:absolute;left:56px;top:202px;width:27px;height:27px;background:#22c5fd;border-radius:7px;box-shadow:0 1px 2px rgba(200,150,120,.25)"></div>
<div style="position:absolute;left:86px;top:202px;width:27px;height:27px;background:#22c5fd;border-radius:7px;box-shadow:0 1px 2px rgba(200,150,120,.25)"></div>
<div style="position:absolute;left:117px;top:202px;width:27px;height:27px;background:#22c5fd;border-radius:7px;box-shadow:0 1px 2px rgba(200,150,120,.25)"></div>
<div style="position:absolute;left:148px;top:202px;width:27px;height:27px;background:#22c5fd;border-radius:7px;box-shadow:0 1px 2px rgba(200,150,120,.25)"></div>
<svg style="position:absolute;left:25px;top:202px" width="27" height="27" viewBox="0 0 27 27"><path d="M9.4 12.2V9.5H12.2M14.8 9.5H17.6V12.2M17.6 15.2V18H14.8M12.2 18H9.4V15.2" fill="none" stroke="#ffffff" stroke-width="1.3"/></svg>
<svg style="position:absolute;left:56px;top:202px" width="27" height="27" viewBox="0 0 27 27"><circle cx="10.8" cy="11.8" r="3.6" fill="none" stroke="#ffffff" stroke-width="1.3"/><path d="M13.4 14.4L17.8 18.6" stroke="#ffffff" stroke-width="1.4"/></svg>
<svg style="position:absolute;left:86px;top:202px" width="27" height="27" viewBox="0 0 27 27"><path d="M7.4 8H17.2L13.3 12.6V18.8L11.3 17.6V12.6z" fill="#f2f2f2"/><polygon points="20.59,18.33 19.06,19.06 18.33,20.59 16.93,19.63 15.24,19.76 15.37,18.07 14.41,16.67 15.94,15.94 16.67,14.41 18.07,15.37 19.76,15.24 19.63,16.93" fill="#f2f2f2"/><circle cx="17.5" cy="17.5" r="2.4" fill="#f2f2f2"/><circle cx="17.5" cy="17.5" r=".75" fill="#22c5fd"/></svg>
<svg style="position:absolute;left:117px;top:202px" width="27" height="27" viewBox="0 0 27 27"><path d="M13.7 9V18M9.2 13.5H18.2" stroke="#ffffff" stroke-width="1.3"/></svg>
<svg style="position:absolute;left:148px;top:202px" width="27" height="27" viewBox="0 0 27 27"><path d="M9 13.5H18.2" stroke="#ffffff" stroke-width="1.3"/></svg>
<div style="position:absolute;left:178px;top:202px;width:84px;height:28px;background:#e1ebfb;border-radius:5px;box-shadow:0 1px 2px rgba(130,150,210,.25)"></div>
<span style="position:absolute;left:183.70px;top:208.60px;font-family:'Liberation Sans',sans-serif;font-weight:normal;font-size:13px;line-height:13px;color:#222222;white-space:pre;letter-spacing:-0.552px;">Message</span>
<svg style="position:absolute;left:243.60px;top:209.85px;overflow:visible" width="10.6" height="11.5" viewBox="0 0 10.5 11.4"><path d="M0.3 0.3H10.2Q10.6 0.5 10.3 1L6.6 5.8V10.2Q6.6 11.4 5.6 11.2L4.2 10.2Q3.9 9.8 3.9 9.4V5.8L0.2 1Q-0.1 0.5 0.3 0.3z" fill="#111111"/></svg>
<div style="position:absolute;left:266px;top:203px;width:272px;height:26px;background:#cbe0ea;border-radius:4px;box-shadow:0 1px 2px rgba(130,150,210,.25)"></div>
<span style="position:absolute;left:270.60px;top:208.60px;font-family:'Liberation Sans',sans-serif;font-weight:normal;font-size:13px;line-height:13px;color:#0d2546;white-space:pre;letter-spacing:-0.025px;">project Equals sample_helloworld</span>
<svg style="position:absolute;left:471.85px;top:207.95px;overflow:visible" width="15.71" height="15.71" viewBox="0 0 24 24"><path d="M12 4.5C7 4.5 2.73 7.61 1 12c1.73 4.39 6 7.5 11 7.5s9.27-3.11 11-7.5c-1.73-4.39-6-7.5-11-7.5zM12 17c-2.76 0-5-2.24-5-5s2.24-5 5-5 5 2.240 5 5-2.24 5-5 5zm0-8c-1.66 0-3 1.34-3 3s1.34 3 3 3 3-1.34 3-3-1.34-3-3-3z" fill="#0d2546"/></svg>
<svg style="position:absolute;left:496px;top:208px" width="15" height="15" viewBox="0 0 15 15"><path d="M2.3 12.7L2.6 10.2L10.6 2.2A.9 .9 0 0 1 11.9 2.2L12.8 3.1A.9 .9 0 0 1 12.8 4.4L4.8 12.4z" fill="none" stroke="#0d2546" stroke-width="1.5" stroke-linejoin="round"/><path d="M9.3 3.5L11.5 5.7" stroke="#0d2546" stroke-width="1.3"/></svg>
<svg style="position:absolute;left:520px;top:208px" width="14" height="15" viewBox="0 0 14 15"><rect x="3.4" y="4.4" width="7.2" height="9.2" rx=".6" fill="none" stroke="#0d2546" stroke-width="1.6"/><rect x="2.4" y="2.2" width="9.2" height="1.6" fill="#0d2546"/><rect x="5.2" y="1" width="3.6" height="1.6" fill="#0d2546"/></svg>
<div style="position:absolute;left:543px;top:202px;width:35px;height:28px;background:#e1ebfb;border-radius:5px;box-shadow:0 1px 2px rgba(130,150,210,.25)"></div>
<span style="position:absolute;left:548.00px;top:208.60px;font-family:'Liberation Sans',sans-serif;font-weight:normal;font-size:13px;line-height:13px;color:#222222;white-space:pre;letter-spacing:-1.219px;">AND</span>
<div style="position:absolute;left:583px;top:203px;width:239px;height:26px;background:#ec7657;border-radius:4px;box-shadow:0 1px 2px rgba(130,150,210,.3)"></div>
<span style="position:absolute;left:587.30px;top:208.60px;font-family:'Liberation Sans',sans-serif;font-weight:normal;font-size:13px;line-height:13px;color:#0d2546;white-space:pre;letter-spacing:-0.215px;">Level Fatal, Error, Warn, Info</span>
<svg style="position:absolute;left:756.65px;top:207.95px;overflow:visible" width="15.71" height="15.71" viewBox="0 0 24 24"><path d="M12 7c2.76 0 5 2.24 5 5 0 .65-.13 1.26-.36 1.83l2.92 2.92c1.51-1.26 2.7-2.89 3.43-4.75-1.73-4.39-6-7.5-11-7.5-1.4 0-2.74.25-3.98.7l2.16 2.16C10.74 7.13 11.35 7 12 7zM2 4.27l2.28 2.28.46.46C3.08 8.3 1.78 10.02 1 12c1.73 4.39 6 7.5 11 7.5 1.55 0 3.03-.3 4.38-.84l.42.42L19.73 22 21 20.73 3.27 3 2 4.27zM7.53 9.8l1.55 1.55c-.05.21-.08.43-.08.65 0 1.66 1.34 3 3 3 .22 0 .44-.03.65-.08l1.55 1.55c-.67.33-1.41.53-2.2.53-2.76 0-5-2.24-5-5 0-.79.2-1.53.53-2.2zm4.31-.78l3.15 3.15.02-.16c0-1.66-1.34-3-3-3l-.17.01z" fill="#0d2546"/></svg>
<svg style="position:absolute;left:780px;top:208px" width="15" height="15" viewBox="0 0 15 15"><path d="M2.3 12.7L2.6 10.2L10.6 2.2A.9 .9 0 0 1 11.9 2.2L12.8 3.1A.9 .9 0 0 1 12.8 4.4L4.8 12.4z" fill="none" stroke="#0d2546" stroke-width="1.5" stroke-linejoin="round"/><path d="M9.3 3.5L11.5 5.7" stroke="#0d2546" stroke-width="1.3"/></svg>
<svg style="position:absolute;left:803px;top:208px" width="14" height="15" viewBox="0 0 14 15"><rect x="3.4" y="4.4" width="7.2" height="9.2" rx=".6" fill="none" stroke="#0d2546" stroke-width="1.6"/><rect x="2.4" y="2.2" width="9.2" height="1.6" fill="#0d2546"/><rect x="5.2" y="1" width="3.6" height="1.6" fill="#0d2546"/></svg>
<div style="position:absolute;left:9px;top:265px;width:1545px;height:103px;background:#e8f2ee;border-bottom:1px solid #b3c4bd;border-radius:0 0 6px 6px;overflow:hidden">
<span style="position:absolute;left:3.80px;top:-4.77px;font-family:'Liberation Mono',monospace;font-weight:normal;font-size:12.87px;line-height:12.87px;color:#111111;white-space:pre;-webkit-text-stroke:0.08px #111111;">| Request        |      Current      |      Average      |</span>
<span style="position:absolute;left:3.80px;top:10.53px;font-family:'Liberation Mono',monospace;font-weight:normal;font-size:12.87px;line-height:12.87px;color:#111111;white-space:pre;-webkit-text-stroke:0.08px #111111;">|================|===================|===================|</span>
<span style="position:absolute;left:3.80px;top:25.83px;font-family:'Liberation Mono',monospace;font-weight:normal;font-size:12.87px;line-height:12.87px;color:#111111;white-space:pre;-webkit-text-stroke:0.08px #111111;">| Host           |       0 ms (  0%) |       4 ms (  1%) |</span>
<span style="position:absolute;left:3.80px;top:41.13px;font-family:'Liberation Mono',monospace;font-weight:normal;font-size:12.87px;line-height:12.87px;color:#111111;white-space:pre;-webkit-text-stroke:0.08px #111111;">| Convertigo     |     224 ms (100%) |     393 ms ( 99%) |</span>
<span style="position:absolute;left:3.80px;top:56.43px;font-family:'Liberation Mono',monospace;font-weight:normal;font-size:12.87px;line-height:12.87px;color:#111111;white-space:pre;-webkit-text-stroke:0.08px #111111;">|                |===================|                   |</span>
<span style="position:absolute;left:3.80px;top:71.73px;font-family:'Liberation Mono',monospace;font-weight:normal;font-size:12.87px;line-height:12.87px;color:#111111;white-space:pre;-webkit-text-stroke:0.08px #111111;">| Total          |     224 ms        |     397 ms        |</span>
<span style="position:absolute;left:3.80px;top:87.03px;font-family:'Liberation Mono',monospace;font-weight:normal;font-size:12.87px;line-height:12.87px;color:#111111;white-space:pre;-webkit-text-stroke:0.08px #111111;"> ========================================================</span>
<svg style="position:absolute;left:0;top:0" width="1545" height="103"><polyline points="297.20,62.00 297.45,61.74 297.70,61.49 297.95,61.25 298.20,61.05 298.45,60.89 298.70,60.78 298.95,60.71 299.20,60.70 299.45,60.74 299.70,60.84 299.95,60.98 300.20,61.16 300.45,61.38 300.70,61.62 300.95,61.88 301.20,62.15 301.45,62.41 301.70,62.65 301.95,62.86 302.20,63.04 302.45,63.18 302.70,63.26 302.95,63.30 303.20,63.28 303.45,63.21 303.70,63.09 303.95,62.92 304.20,62.72 304.45,62.49 304.70,62.23 304.95,61.97 305.20,61.71 305.45,61.46 305.70,61.23 305.95,61.03 306.20,60.88 306.45,60.77 306.70,60.71 306.95,60.70 307.20,60.75 307.45,60.85 307.70,61.00 307.95,61.19 308.20,61.41 308.45,61.66 308.70,61.92 308.95,62.18 309.20,62.44 309.45,62.67 309.70,62.88 309.95,63.06 310.20,63.19 310.45,63.27 310.70,63.30 310.95,63.28 311.20,63.20 311.45,63.07 311.70,62.90 311.95,62.69 312.20,62.46 312.45,62.20 312.70,61.94 312.95,61.68 313.20,61.43 313.45,61.20 313.70,61.01 313.95,60.86 314.20,60.76 314.45,60.71 314.70,60.71 314.95,60.76 315.20,60.87 315.45,61.02 315.70,61.21 315.95,61.44 316.20,61.69 316.45,61.95 316.70,62.21 316.95,62.47 317.20,62.70 317.45,62.91 317.70,63.08 317.95,63.20 318.20,63.28 318.45,63.30 318.70,63.27 318.95,63.19 319.20,63.05 319.45,62.88 319.70,62.67 319.95,62.43 320.20,62.17 320.45,61.90 320.70,61.64 320.95,61.40 321.20,61.18 321.45,60.99 321.70,60.85 321.95,60.75 322.20,60.70 322.45,60.71 322.70,60.77 322.95,60.88 323.20,61.04 323.45,61.24 323.70,61.47 323.95,61.72 324.20,61.98 324.45,62.24 324.70,62.50 324.95,62.73 325.20,62.93 325.45,63.09 325.70,63.21 325.95,63.28 326.20,63.30 326.45,63.26 326.70,63.17 326.95,63.03 327.20,62.85 327.45,62.64 327.70,62.40 327.95,62.14 328.20,61.87 328.45,61.61 328.70,61.37 328.95,61.15 329.20,60.97 329.45,60.83 329.70,60.74 329.95,60.70 330.20,60.72 330.45,60.78 330.70,60.90 330.95,61.06 331.20,61.26 331.45,61.50 331.70,61.75 331.95,62.01 332.20,62.27 332.45,62.52 332.70,62.75 332.95,62.95 333.20,63.11 333.45,63.22 333.70,63.29 333.95,63.30 334.20,63.25 334.45,63.16 334.70,63.01 334.95,62.83 335.20,62.61 335.45,62.37 335.70,62.11 335.95,61.84 336.20,61.58 336.45,61.34 336.70,61.13 336.95,60.95 337.20,60.82 337.45,60.73 337.70,60.70 337.95,60.72 338.20,60.79 338.45,60.92 338.70,61.08 338.95,61.29 339.20,61.52 339.45,61.78 339.70,62.04 339.95,62.30 340.20,62.55 340.45,62.78 340.70,62.97 340.95,63.13 341.20,63.24 341.45,63.29 341.70,63.29 341.95,63.24 342.20,63.14 342.45,62.99 342.70,62.80 342.95,62.58 343.20,62.33 343.45,62.07 343.70,61.81 343.95,61.55 344.20,61.32 344.45,61.11 344.70,60.93 344.95,60.81 345.20,60.73 345.45,60.70 345.70,60.73 345.95,60.81 346.20,60.93 346.45,61.11 346.70,61.32 346.95,61.55 347.20,61.81 347.45,62.07 347.70,62.33 347.95,62.58 348.20,62.80 348.45,62.99 348.70,63.14 348.95,63.24 349.20,63.29 349.45,63.29 349.70,63.24 349.95,63.13 350.20,62.97 350.45,62.78 350.70,62.55 350.95,62.30 351.20,62.04 351.45,61.78 351.70,61.52 351.95,61.29 352.20,61.08 352.45,60.92 352.70,60.79 352.95,60.72 353.20,60.70 353.45,60.73 353.70,60.82 353.95,60.95 354.20,61.13 354.45,61.34 354.70,61.58 354.95,61.84 355.20,62.11 355.45,62.37 355.70,62.61 355.95,62.83 356.20,63.01 356.45,63.16 356.70,63.25 356.95,63.30 357.20,63.29 357.45,63.22 357.70,63.11 357.95,62.95 358.20,62.75 358.45,62.52 358.70,62.27 358.95,62.01 359.20,61.75 359.45,61.50 359.70,61.26 359.95,61.06 360.20,60.90 360.45,60.78 360.70,60.72 360.95,60.70 361.20,60.74 361.45,60.83 361.70,60.97 361.95,61.15 362.20,61.37 362.45,61.61 362.70,61.87 362.95,62.14 363.20,62.40 363.45,62.64 363.70,62.85 363.95,63.03 364.20,63.17 364.45,63.26 364.70,63.30 364.95,63.28 365.20,63.21 365.45,63.09 365.70,62.93 365.95,62.73 366.20,62.50 366.45,62.24 366.70,61.98 366.95,61.72 367.20,61.47 367.45,61.24 367.70,61.04 367.95,60.88 368.20,60.77 368.45,60.71 368.70,60.70 368.95,60.75 369.20,60.85 369.45,60.99 369.70,61.18 369.95,61.40 370.20,61.64 370.45,61.90 370.70,62.17 370.95,62.43 371.20,62.67 371.45,62.88 371.70,63.05 371.95,63.19 372.20,63.27 372.45,63.30 372.70,63.28 372.95,63.20 373.20,63.08 373.45,62.91 373.70,62.70 373.95,62.47 374.20,62.21 374.45,61.95 374.70,61.69 374.95,61.44 375.20,61.21 375.45,61.02 375.70,60.87 375.95,60.76 376.20,60.71 376.45,60.71 376.70,60.76 376.95,60.86 377.20,61.01 377.45,61.20 377.70,61.43 377.95,61.68 378.20,61.94 378.45,62.20 378.70,62.46 378.95,62.69 379.20,62.90 379.45,63.07 379.70,63.20 379.95,63.28 380.20,63.30 380.45,63.27 380.70,63.19 380.95,63.06 381.20,62.88 381.45,62.67 381.70,62.44 381.95,62.18 382.20,61.92 382.45,61.66 382.70,61.41 382.95,61.19 383.20,61.00 383.45,60.85 383.70,60.75 383.95,60.70 384.20,60.71 384.45,60.77 384.70,60.88 384.95,61.03 385.20,61.23 385.45,61.46 385.70,61.71 385.95,61.97 386.20,62.23 386.45,62.49 386.70,62.72 386.95,62.92 387.20,63.09 387.45,63.21 387.70,63.28 387.95,63.30 388.20,63.26 388.45,63.18 388.70,63.04 388.95,62.86 389.20,62.65 389.45,62.41 389.70,62.15 389.95,61.88 390.20,61.62 390.45,61.38 390.70,61.16 390.95,60.98 391.20,60.84 391.45,60.74 391.70,60.70 391.95,60.71 392.20,60.78 392.45,60.89 392.70,61.05 392.95,61.25 393.20,61.49 393.45,61.74 393.70,62.00 393.95,62.26 394.20,62.51 394.45,62.75 394.70,62.95 394.95,63.11 395.20,63.22 395.45,63.29 395.70,63.30 395.95,63.26 396.20,63.16 396.45,63.02 396.70,62.84 396.95,62.62 397.20,62.38 397.45,62.12 397.70,61.85 397.95,61.59 398.20,61.35 398.45,61.14 398.70,60.96 398.95,60.82 399.20,60.74 399.45,60.70 399.70,60.72 399.95,60.79 400.20,60.91 400.45,61.08 400.70,61.28 400.95,61.51 401.20,61.77 401.45,62.03 401.70,62.29 401.95,62.54 402.20,62.77 402.45,62.97 402.70,63.12 402.95,63.23 403.20,63.29 403.45,63.30 403.70,63.25 403.95,63.15 404.20,63.00 404.45,62.81 404.70,62.59 404.95,62.34 405.20,62.08 405.45,61.82 405.70,61.56 405.95,61.33 406.20,61.12 406.45,60.94 406.70,60.81 406.95,60.73 407.20,60.70 407.45,60.72 407.70,60.80 407.95,60.93 408.20,61.10 408.45,61.31 408.70,61.54 408.95,61.80 409.20,62.06 409.45,62.32 409.70,62.57 409.95,62.80 410.20,62.99 410.45,63.14 410.70,63.24 410.95,63.29 411.20,63.29 411.45,63.24 411.70,63.13 411.95,62.98 412.20,62.79 412.45,62.56 412.70,62.31 412.95,62.05 413.20,61.79 413.45,61.53 413.70,61.30 413.95,61.09 414.20,60.92 414.45,60.80 414.70,60.72 414.95,60.70 415.20,60.73 415.45,60.81 415.70,60.95 415.95,61.12 416.20,61.33 416.45,61.57 416.70,61.83 416.95,62.10 417.20,62.36 417.45,62.60 417.70,62.82 417.95,63.01 418.20,63.15 418.45,63.25 418.70,63.30 418.95,63.29 419.20,63.23 419.45,63.12 419.70,62.96 419.95,62.76 420.20,62.53 420.45,62.28 420.70,62.02 420.95,61.76 421.20,61.50 421.45,61.27 421.70,61.07 421.95,60.91 422.20,60.79 422.45,60.72 422.70,60.70 422.95,60.74 423.20,60.83 423.45,60.97 423.70,61.15 423.95,61.36 424.20,61.60 424.45,61.86 424.70,62.13 424.95,62.39 425.20,62.63 425.45,62.85 425.70,63.03 425.95,63.17 426.20,63.26 426.45,63.30 426.70,63.28 426.95,63.22 427.20,63.10 427.45,62.94 427.70,62.74 427.95,62.50 428.20,62.25 428.45,61.99 428.70,61.73 428.95,61.48 429.20,61.25 429.45,61.05 429.70,60.89 429.95,60.78 430.20,60.71 430.45,60.70 430.70,60.75 430.95,60.84 431.20,60.99 431.45,61.17 431.70,61.39 431.95,61.63 432.20,61.89 432.45,62.16 432.70,62.42 432.95,62.66 433.20,62.87 433.45,63.05 433.70,63.18 433.95,63.27 434.20,63.30 434.45,63.28 434.70,63.21 434.95,63.08 435.20,62.92 435.45,62.71 435.70,62.48 435.95,62.22 436.20,61.96 436.45,61.70 436.70,61.45 436.95,61.22 437.20,61.03 437.45,60.87 437.70,60.76 437.95,60.71 438.20,60.71 438.45,60.76 438.70,60.86 438.95,61.01 439.20,61.20 439.45,61.42 439.70,61.67 439.95,61.93 440.20,62.19 440.45,62.45 440.70,62.68 440.95,62.89 441.20,63.07 441.45,63.19 441.70,63.27 441.95,63.30 442.20,63.27 442.45,63.19 442.70,63.07 442.95,62.89 443.20,62.68 443.45,62.45" fill="none" stroke="#1a1a1a" stroke-width="1.05"/></svg>
</div>
<div style="position:absolute;left:9px;top:368px;width:1545px;height:40px;background:#c6ecfc;border-bottom:1px solid #adccd9;border-radius:0 0 6px 6px;overflow:hidden">
<span style="position:absolute;left:1.10px;top:4.00px;font-family:'Liberation Sans',sans-serif;font-weight:normal;font-size:12px;line-height:12px;color:#5d5d5d;white-space:pre;letter-spacing:1.078px;">2026-02-24</span>
<span style="position:absolute;left:87.10px;top:4.00px;font-family:'Liberation Sans',sans-serif;font-weight:normal;font-size:12px;line-height:12px;color:#5d5d5d;white-space:pre;letter-spacing:0.834px;">17:47:31,063</span>
<span style="position:absolute;left:178.20px;top:4.00px;font-family:'Liberation Sans',sans-serif;font-weight:normal;font-size:12px;line-height:12px;color:#5d5d5d;white-space:pre;letter-spacing:0.556px;">0ms</span>
<span style="position:absolute;left:223.80px;top:4.00px;font-family:'Liberation Sans',sans-serif;font-weight:normal;font-size:12px;line-height:12px;color:#5d5d5d;white-space:pre;letter-spacing:0.388px;">Context</span>
<span style="position:absolute;left:335.10px;top:4.00px;font-family:'Liberation Sans',sans-serif;font-weight:normal;font-size:12px;line-height:12px;color:#5d5d5d;white-space:pre;letter-spacing:0.831px;">http-nio-18080-exec-60</span>
<span style="position:absolute;left:536.00px;top:4.00px;font-family:'Liberation Sans',sans-serif;font-weight:normal;font-size:12px;line-height:12px;color:#5d5d5d;white-space:pre;letter-spacing:0.644px;">'c8o:admin'</span>
<span style="position:absolute;left:637.30px;top:4.00px;font-family:'Liberation Sans',sans-serif;font-weight:normal;font-size:12px;line-height:12px;color:#5d5d5d;white-space:pre;letter-spacing:0.503px;">sample_HelloWorld</span>
<span style="position:absolute;left:762.00px;top:4.00px;font-family:'Liberation Sans',sans-serif;font-weight:normal;font-size:12px;line-height:12px;color:#5d5d5d;white-space:pre;letter-spacing:0.285px;">GetFeed</span>
<span style="position:absolute;left:1065.20px;top:4.00px;font-family:'Liberation Sans',sans-serif;font-weight:normal;font-size:12px;line-height:12px;color:#5d5d5d;white-space:pre;letter-spacing:0.394px;">studio_sample_HelloWorld:S:GetFeed</span>
<div style="position:absolute;left:1344.10px;top:0;width:78.3px;height:20px;overflow:hidden"><span style="position:absolute;left:0.00px;top:4.00px;font-family:'Liberation Sans',sans-serif;font-weight:normal;font-size:12px;line-height:12px;color:#5d5d5d;white-space:pre;letter-spacing:1.000px;">1b3c060a1122</span></div>
<div style="position:absolute;left:1423.90px;top:0;width:99.2px;height:20px;overflow:hidden"><span style="position:absolute;left:0.00px;top:4.00px;font-family:'Liberation Sans',sans-serif;font-weight:normal;font-size:12px;line-height:12px;color:#5d5d5d;white-space:pre;letter-spacing:0.720px;">web-b7548cd6-1d</span></div>
<span style="position:absolute;left:3.80px;top:23.50px;font-family:'Liberation Mono',monospace;font-weight:normal;font-size:12.87px;line-height:12.87px;color:#111111;white-space:pre;-webkit-text-stroke:0.08px #111111;">[JsonServletRequester] end of request</span>
</div>
<div style="position:absolute;left:9px;top:408px;width:1545px;height:40px;background:#d0f0fd;border-bottom:1px solid #adccd9;border-radius:0 0 6px 6px;overflow:hidden">
<span style="position:absolute;left:1.10px;top:3.00px;font-family:'Liberation Sans',sans-serif;font-weight:normal;font-size:12px;line-height:12px;color:#5d5d5d;white-space:pre;letter-spacing:1.078px;">2026-02-24</span>
<span style="position:absolute;left:87.10px;top:3.00px;font-family:'Liberation Sans',sans-serif;font-weight:normal;font-size:12px;line-height:12px;color:#5d5d5d;white-space:pre;letter-spacing:0.870px;">17:47:34,936</span>
<span style="position:absolute;left:178.20px;top:3.00px;font-family:'Liberation Sans',sans-serif;font-weight:normal;font-size:12px;line-height:12px;color:#5d5d5d;white-space:pre;letter-spacing:0.656px;">3.87s</span>
<span style="position:absolute;left:223.80px;top:3.00px;font-family:'Liberation Sans',sans-serif;font-weight:normal;font-size:12px;line-height:12px;color:#5d5d5d;white-space:pre;letter-spacing:0.258px;">Devices</span>
<span style="position:absolute;left:335.10px;top:3.00px;font-family:'Liberation Sans',sans-serif;font-weight:normal;font-size:12px;line-height:12px;color:#5d5d5d;white-space:pre;letter-spacing:0.845px;">http-nio-18080-exec-11</span>
<span style="position:absolute;left:536.00px;top:3.00px;font-family:'Liberation Sans',sans-serif;font-weight:normal;font-size:12px;line-height:12px;color:#5d5d5d;white-space:pre;letter-spacing:0.658px;">c8o:admin</span>
<span style="position:absolute;left:637.30px;top:3.00px;font-family:'Liberation Sans',sans-serif;font-weight:normal;font-size:12px;line-height:12px;color:#5d5d5d;white-space:pre;letter-spacing:0.503px;">sample_HelloWorld</span>
<span style="position:absolute;left:1065.20px;top:3.00px;font-family:'Liberation Sans',sans-serif;font-weight:normal;font-size:12px;line-height:12px;color:#5d5d5d;white-space:pre;letter-spacing:0.546px;">A7EFD5F148F9E2ED528064DF7064563A</span>
<div style="position:absolute;left:1344.10px;top:0;width:78.3px;height:20px;overflow:hidden"><span style="position:absolute;left:0.00px;top:3.00px;font-family:'Liberation Sans',sans-serif;font-weight:normal;font-size:12px;line-height:12px;color:#5d5d5d;white-space:pre;letter-spacing:0.788px;">D1JMAI2I</span></div>
<div style="position:absolute;left:1423.90px;top:0;width:99.2px;height:20px;overflow:hidden"><span style="position:absolute;left:0.00px;top:3.00px;font-family:'Liberation Sans',sans-serif;font-weight:normal;font-size:12px;line-height:12px;color:#5d5d5d;white-space:pre;letter-spacing:0.406px;">WEB-B7548CD6-</span></div>
<span style="position:absolute;left:3.80px;top:23.50px;font-family:'Liberation Mono',monospace;font-weight:normal;font-size:12.87px;line-height:12.87px;color:#111111;white-space:pre;-webkit-text-stroke:0.08px #111111;">(0.002) [c8o] Method call: C8o Constructor</span>
</div>
<div style="position:absolute;left:9px;top:448px;width:1545px;height:40px;background:#c6ecfc;border-bottom:1px solid #adccd9;border-radius:0 0 6px 6px;overflow:hidden">
<span style="position:absolute;left:1.10px;top:3.00px;font-family:'Liberation Sans',sans-serif;font-weight:normal;font-size:12px;line-height:12px;color:#5d5d5d;white-space:pre;letter-spacing:1.078px;">2026-02-24</span>
<span style="position:absolute;left:87.10px;top:3.00px;font-family:'Liberation Sans',sans-serif;font-weight:normal;font-size:12px;line-height:12px;color:#5d5d5d;white-space:pre;letter-spacing:0.870px;">17:47:34,936</span>
<span style="position:absolute;left:178.20px;top:3.00px;font-family:'Liberation Sans',sans-serif;font-weight:normal;font-size:12px;line-height:12px;color:#5d5d5d;white-space:pre;letter-spacing:0.556px;">0ms</span>
<span style="position:absolute;left:223.80px;top:3.00px;font-family:'Liberation Sans',sans-serif;font-weight:normal;font-size:12px;line-height:12px;color:#5d5d5d;white-space:pre;letter-spacing:0.258px;">Devices</span>
<span style="position:absolute;left:335.10px;top:3.00px;font-family:'Liberation Sans',sans-serif;font-weight:normal;font-size:12px;line-height:12px;color:#5d5d5d;white-space:pre;letter-spacing:0.845px;">http-nio-18080-exec-11</span>
<span style="position:absolute;left:536.00px;top:3.00px;font-family:'Liberation Sans',sans-serif;font-weight:normal;font-size:12px;line-height:12px;color:#5d5d5d;white-space:pre;letter-spacing:0.658px;">c8o:admin</span>
<span style="position:absolute;left:637.30px;top:3.00px;font-family:'Liberation Sans',sans-serif;font-weight:normal;font-size:12px;line-height:12px;color:#5d5d5d;white-space:pre;letter-spacing:0.503px;">sample_HelloWorld</span>
<span style="position:absolute;left:1065.20px;top:3.00px;font-family:'Liberation Sans',sans-serif;font-weight:normal;font-size:12px;line-height:12px;color:#5d5d5d;white-space:pre;letter-spacing:0.546px;">A7EFD5F148F9E2ED528064DF7064563A</span>
<div style="position:absolute;left:1344.10px;top:0;width:78.3px;height:20px;overflow:hidden"><span style="position:absolute;left:0.00px;top:3.00px;font-family:'Liberation Sans',sans-serif;font-weight:normal;font-size:12px;line-height:12px;color:#5d5d5d;white-space:pre;letter-spacing:0.788px;">D1JMAI2I</span></div>
<div style="position:absolute;left:1423.90px;top:0;width:99.2px;height:20px;overflow:hidden"><span style="position:absolute;left:0.00px;top:3.00px;font-family:'Liberation Sans',sans-serif;font-weight:normal;font-size:12px;line-height:12px;color:#5d5d5d;white-space:pre;letter-spacing:0.406px;">WEB-B7548CD6-</span></div>
<span style="position:absolute;left:3.80px;top:22.50px;font-family:'Liberation Mono',monospace;font-weight:normal;font-size:12.87px;line-height:12.87px;color:#111111;white-space:pre;-webkit-text-stroke:0.08px #111111;">(0.038) [c8o] [handleNetworkEvents] Handle a network event: Reachable</span>
</div>
<div style="position:absolute;left:9px;top:488px;width:1545px;height:39px;background:#d0f0fd;border-bottom:1px solid #adccd9;border-radius:0 0 6px 6px;overflow:hidden">
<span style="position:absolute;left:1.10px;top:3.00px;font-family:'Liberation Sans',sans-serif;font-weight:normal;font-size:12px;line-height:12px;color:#5d5d5d;white-space:pre;letter-spacing:1.078px;">2026-02-24</span>
<span style="position:absolute;left:87.10px;top:3.00px;font-family:'Liberation Sans',sans-serif;font-weight:normal;font-size:12px;line-height:12px;color:#5d5d5d;white-space:pre;letter-spacing:0.870px;">17:47:34,936</span>
<span style="position:absolute;left:178.20px;top:3.00px;font-family:'Liberation Sans',sans-serif;font-weight:normal;font-size:12px;line-height:12px;color:#5d5d5d;white-space:pre;letter-spacing:0.556px;">0ms</span>
<span style="position:absolute;left:223.80px;top:3.00px;font-family:'Liberation Sans',sans-serif;font-weight:normal;font-size:12px;line-height:12px;color:#5d5d5d;white-space:pre;letter-spacing:0.258px;">Devices</span>
<span style="position:absolute;left:335.10px;top:3.00px;font-family:'Liberation Sans',sans-serif;font-weight:normal;font-size:12px;line-height:12px;color:#5d5d5d;white-space:pre;letter-spacing:0.845px;">http-nio-18080-exec-11</span>
<span style="position:absolute;left:536.00px;top:3.00px;font-family:'Liberation Sans',sans-serif;font-weight:normal;font-size:12px;line-height:12px;color:#5d5d5d;white-space:pre;letter-spacing:0.658px;">c8o:admin</span>
<span style="position:absolute;left:637.30px;top:3.00px;font-family:'Liberation Sans',sans-serif;font-weight:normal;font-size:12px;line-height:12px;color:#5d5d5d;white-space:pre;letter-spacing:0.503px;">sample_HelloWorld</span>
<span style="position:absolute;left:1065.20px;top:3.00px;font-family:'Liberation Sans',sans-serif;font-weight:normal;font-size:12px;line-height:12px;color:#5d5d5d;white-space:pre;letter-spacing:0.546px;">A7EFD5F148F9E2ED528064DF7064563A</span>
<div style="position:absolute;left:1344.10px;top:0;width:78.3px;height:20px;overflow:hidden"><span style="position:absolute;left:0.00px;top:3.00px;font-family:'Liberation Sans',sans-serif;font-weight:normal;font-size:12px;line-height:12px;color:#5d5d5d;white-space:pre;letter-spacing:0.788px;">D1JMAI2I</span></div>
<div style="position:absolute;left:1423.90px;top:0;width:99.2px;height:20px;overflow:hidden"><span style="position:absolute;left:0.00px;top:3.00px;font-family:'Liberation Sans',sans-serif;font-weight:normal;font-size:12px;line-height:12px;color:#5d5d5d;white-space:pre;letter-spacing:0.406px;">WEB-B7548CD6-</span></div>
<span style="position:absolute;left:3.80px;top:22.50px;font-family:'Liberation Mono',monospace;font-weight:normal;font-size:12.87px;line-height:12.87px;color:#111111;white-space:pre;-webkit-text-stroke:0.08px #111111;">(0.046) [c8o] [C8oSessionManager] Polling for session, next check will be in 1710000ms</span>
</div>
<div style="position:absolute;left:9px;top:527px;width:1545px;height:40px;background:#c6ecfc;border-bottom:1px solid #adccd9;border-radius:0 0 6px 6px;overflow:hidden">
<span style="position:absolute;left:1.10px;top:3.00px;font-family:'Liberation Sans',sans-serif;font-weight:normal;font-size:12px;line-height:12px;color:#5d5d5d;white-space:pre;letter-spacing:1.078px;">2026-02-24</span>
<span style="position:absolute;left:87.10px;top:3.00px;font-family:'Liberation Sans',sans-serif;font-weight:normal;font-size:12px;line-height:12px;color:#5d5d5d;white-space:pre;letter-spacing:0.870px;">17:47:34,936</span>
<span style="position:absolute;left:178.20px;top:3.00px;font-family:'Liberation Sans',sans-serif;font-weight:normal;font-size:12px;line-height:12px;color:#5d5d5d;white-space:pre;letter-spacing:0.556px;">0ms</span>
<span style="position:absolute;left:223.80px;top:3.00px;font-family:'Liberation Sans',sans-serif;font-weight:normal;font-size:12px;line-height:12px;color:#5d5d5d;white-space:pre;letter-spacing:0.258px;">Devices</span>
<span style="position:absolute;left:335.10px;top:3.00px;font-family:'Liberation Sans',sans-serif;font-weight:normal;font-size:12px;line-height:12px;color:#5d5d5d;white-space:pre;letter-spacing:0.845px;">http-nio-18080-exec-11</span>
<span style="position:absolute;left:536.00px;top:3.00px;font-family:'Liberation Sans',sans-serif;font-weight:normal;font-size:12px;line-height:12px;color:#5d5d5d;white-space:pre;letter-spacing:0.658px;">c8o:admin</span>
<span style="position:absolute;left:637.30px;top:3.00px;font-family:'Liberation Sans',sans-serif;font-weight:normal;font-size:12px;line-height:12px;color:#5d5d5d;white-space:pre;letter-spacing:0.503px;">sample_HelloWorld</span>
<span style="position:absolute;left:1065.20px;top:3.00px;font-family:'Liberation Sans',sans-serif;font-weight:normal;font-size:12px;line-height:12px;color:#5d5d5d;white-space:pre;letter-spacing:0.546px;">A7EFD5F148F9E2ED528064DF7064563A</span>
<div style="position:absolute;left:1344.10px;top:0;width:78.3px;height:20px;overflow:hidden"><span style="position:absolute;left:0.00px;top:3.00px;font-family:'Liberation Sans',sans-serif;font-weight:normal;font-size:12px;line-height:12px;color:#5d5d5d;white-space:pre;letter-spacing:0.788px;">D1JMAI2I</span></div>
<div style="position:absolute;left:1423.90px;top:0;width:99.2px;height:20px;overflow:hidden"><span style="position:absolute;left:0.00px;top:3.00px;font-family:'Liberation Sans',sans-serif;font-weight:normal;font-size:12px;line-height:12px;color:#5d5d5d;white-space:pre;letter-spacing:0.406px;">WEB-B7548CD6-</span></div>
<span style="position:absolute;left:3.80px;top:23.50px;font-family:'Liberation Mono',monospace;font-weight:normal;font-size:12.87px;line-height:12.87px;color:#111111;white-space:pre;-webkit-text-stroke:0.08px #111111;">(0.992) [MB] onClick[ETS1514310966235]: started</span>
</div>
<div style="position:absolute;left:9px;top:567px;width:1545px;height:40px;background:#d0f0fd;border-bottom:1px solid #adccd9;border-radius:0 0 6px 6px;overflow:hidden">
<span style="position:absolute;left:1.10px;top:3.00px;font-family:'Liberation Sans',sans-serif;font-weight:normal;font-size:12px;line-height:12px;color:#5d5d5d;white-space:pre;letter-spacing:1.078px;">2026-02-24</span>
<span style="position:absolute;left:87.10px;top:3.00px;font-family:'Liberation Sans',sans-serif;font-weight:normal;font-size:12px;line-height:12px;color:#5d5d5d;white-space:pre;letter-spacing:0.870px;">17:47:34,936</span>
<span style="position:absolute;left:178.20px;top:3.00px;font-family:'Liberation Sans',sans-serif;font-weight:normal;font-size:12px;line-height:12px;color:#5d5d5d;white-space:pre;letter-spacing:0.556px;">0ms</span>
<span style="position:absolute;left:223.80px;top:3.00px;font-family:'Liberation Sans',sans-serif;font-weight:normal;font-size:12px;line-height:12px;color:#5d5d5d;white-space:pre;letter-spacing:0.258px;">Devices</span>
<span style="position:absolute;left:335.10px;top:3.00px;font-family:'Liberation Sans',sans-serif;font-weight:normal;font-size:12px;line-height:12px;color:#5d5d5d;white-space:pre;letter-spacing:0.845px;">http-nio-18080-exec-11</span>
<span style="position:absolute;left:536.00px;top:3.00px;font-family:'Liberation Sans',sans-serif;font-weight:normal;font-size:12px;line-height:12px;color:#5d5d5d;white-space:pre;letter-spacing:0.658px;">c8o:admin</span>
<span style="position:absolute;left:637.30px;top:3.00px;font-family:'Liberation Sans',sans-serif;font-weight:normal;font-size:12px;line-height:12px;color:#5d5d5d;white-space:pre;letter-spacing:0.503px;">sample_HelloWorld</span>
<span style="position:absolute;left:1065.20px;top:3.00px;font-family:'Liberation Sans',sans-serif;font-weight:normal;font-size:12px;line-height:12px;color:#5d5d5d;white-space:pre;letter-spacing:0.546px;">A7EFD5F148F9E2ED528064DF7064563A</span>
<div style="position:absolute;left:1344.10px;top:0;width:78.3px;height:20px;overflow:hidden"><span style="position:absolute;left:0.00px;top:3.00px;font-family:'Liberation Sans',sans-serif;font-weight:normal;font-size:12px;line-height:12px;color:#5d5d5d;white-space:pre;letter-spacing:0.788px;">D1JMAI2I</span></div>
<div style="position:absolute;left:1423.90px;top:0;width:99.2px;height:20px;overflow:hidden"><span style="position:absolute;left:0.00px;top:3.00px;font-family:'Liberation Sans',sans-serif;font-weight:normal;font-size:12px;line-height:12px;color:#5d5d5d;white-space:pre;letter-spacing:0.406px;">WEB-B7548CD6-</span></div>
<span style="position:absolute;left:3.80px;top:22.50px;font-family:'Liberation Mono',monospace;font-weight:normal;font-size:12.87px;line-height:12.87px;color:#111111;white-space:pre;-webkit-text-stroke:0.08px #111111;">(0.993) [MB] CallSequence[ATS1514381726265]: started</span>
</div>
<div style="position:absolute;left:9px;top:607px;width:1545px;height:39px;background:#c6ecfc;border-bottom:1px solid #adccd9;border-radius:0 0 6px 6px;overflow:hidden">
<span style="position:absolute;left:1.10px;top:2.00px;font-family:'Liberation Sans',sans-serif;font-weight:normal;font-size:12px;line-height:12px;color:#5d5d5d;white-space:pre;letter-spacing:1.078px;">2026-02-24</span>
<span style="position:absolute;left:87.10px;top:2.00px;font-family:'Liberation Sans',sans-serif;font-weight:normal;font-size:12px;line-height:12px;color:#5d5d5d;white-space:pre;letter-spacing:0.870px;">17:47:34,936</span>
<span style="position:absolute;left:178.20px;top:2.00px;font-family:'Liberation Sans',sans-serif;font-weight:normal;font-size:12px;line-height:12px;color:#5d5d5d;white-space:pre;letter-spacing:0.556px;">0ms</span>
<span style="position:absolute;left:223.80px;top:2.00px;font-family:'Liberation Sans',sans-serif;font-weight:normal;font-size:12px;line-height:12px;color:#5d5d5d;white-space:pre;letter-spacing:0.258px;">Devices</span>
<span style="position:absolute;left:335.10px;top:2.00px;font-family:'Liberation Sans',sans-serif;font-weight:normal;font-size:12px;line-height:12px;color:#5d5d5d;white-space:pre;letter-spacing:0.845px;">http-nio-18080-exec-11</span>
<span style="position:absolute;left:536.00px;top:2.00px;font-family:'Liberation Sans',sans-serif;font-weight:normal;font-size:12px;line-height:12px;color:#5d5d5d;white-space:pre;letter-spacing:0.658px;">c8o:admin</span>
<span style="position:absolute;left:637.30px;top:2.00px;font-family:'Liberation Sans',sans-serif;font-weight:normal;font-size:12px;line-height:12px;color:#5d5d5d;white-space:pre;letter-spacing:0.503px;">sample_HelloWorld</span>
<span style="position:absolute;left:1065.20px;top:2.00px;font-family:'Liberation Sans',sans-serif;font-weight:normal;font-size:12px;line-height:12px;color:#5d5d5d;white-space:pre;letter-spacing:0.546px;">A7EFD5F148F9E2ED528064DF7064563A</span>
<div style="position:absolute;left:1344.10px;top:0;width:78.3px;height:20px;overflow:hidden"><span style="position:absolute;left:0.00px;top:2.00px;font-family:'Liberation Sans',sans-serif;font-weight:normal;font-size:12px;line-height:12px;color:#5d5d5d;white-space:pre;letter-spacing:0.788px;">D1JMAI2I</span></div>
<div style="position:absolute;left:1423.90px;top:0;width:99.2px;height:20px;overflow:hidden"><span style="position:absolute;left:0.00px;top:2.00px;font-family:'Liberation Sans',sans-serif;font-weight:normal;font-size:12px;line-height:12px;color:#5d5d5d;white-space:pre;letter-spacing:0.406px;">WEB-B7548CD6-</span></div>
<span style="position:absolute;left:3.80px;top:22.50px;font-family:'Liberation Mono',monospace;font-weight:normal;font-size:12.87px;line-height:12.87px;color:#111111;white-space:pre;-webkit-text-stroke:0.08px #111111;">(0.994) [MB] Toast[ATS1727427555714]: started</span>
</div>
<div style="position:absolute;left:9px;top:646px;width:1545px;height:40px;background:#d0f0fd;border-bottom:1px solid #adccd9;border-radius:0 0 6px 6px;overflow:hidden">
<span style="position:absolute;left:1.10px;top:3.00px;font-family:'Liberation Sans',sans-serif;font-weight:normal;font-size:12px;line-height:12px;color:#5d5d5d;white-space:pre;letter-spacing:1.078px;">2026-02-24</span>
<span style="position:absolute;left:87.10px;top:3.00px;font-family:'Liberation Sans',sans-serif;font-weight:normal;font-size:12px;line-height:12px;color:#5d5d5d;white-space:pre;letter-spacing:0.870px;">17:47:34,936</span>
<span style="position:absolute;left:178.20px;top:3.00px;font-family:'Liberation Sans',sans-serif;font-weight:normal;font-size:12px;line-height:12px;color:#5d5d5d;white-space:pre;letter-spacing:0.556px;">0ms</span>
<span style="position:absolute;left:223.80px;top:3.00px;font-family:'Liberation Sans',sans-serif;font-weight:normal;font-size:12px;line-height:12px;color:#5d5d5d;white-space:pre;letter-spacing:0.258px;">Devices</span>
<span style="position:absolute;left:335.10px;top:3.00px;font-family:'Liberation Sans',sans-serif;font-weight:normal;font-size:12px;line-height:12px;color:#5d5d5d;white-space:pre;letter-spacing:0.845px;">http-nio-18080-exec-11</span>
<span style="position:absolute;left:536.00px;top:3.00px;font-family:'Liberation Sans',sans-serif;font-weight:normal;font-size:12px;line-height:12px;color:#5d5d5d;white-space:pre;letter-spacing:0.658px;">c8o:admin</span>
<span style="position:absolute;left:637.30px;top:3.00px;font-family:'Liberation Sans',sans-serif;font-weight:normal;font-size:12px;line-height:12px;color:#5d5d5d;white-space:pre;letter-spacing:0.503px;">sample_HelloWorld</span>
<span style="position:absolute;left:1065.20px;top:3.00px;font-family:'Liberation Sans',sans-serif;font-weight:normal;font-size:12px;line-height:12px;color:#5d5d5d;white-space:pre;letter-spacing:0.546px;">A7EFD5F148F9E2ED528064DF7064563A</span>
<div style="position:absolute;left:1344.10px;top:0;width:78.3px;height:20px;overflow:hidden"><span style="position:absolute;left:0.00px;top:3.00px;font-family:'Liberation Sans',sans-serif;font-weight:normal;font-size:12px;line-height:12px;color:#5d5d5d;white-space:pre;letter-spacing:0.788px;">D1JMAI2I</span></div>
<div style="position:absolute;left:1423.90px;top:0;width:99.2px;height:20px;overflow:hidden"><span style="position:absolute;left:0.00px;top:3.00px;font-family:'Liberation Sans',sans-serif;font-weight:normal;font-size:12px;line-height:12px;color:#5d5d5d;white-space:pre;letter-spacing:0.406px;">WEB-B7548CD6-</span></div>
<span style="position:absolute;left:3.80px;top:23.50px;font-family:'Liberation Mono',monospace;font-weight:normal;font-size:12.87px;line-height:12.87px;color:#111111;white-space:pre;-webkit-text-stroke:0.08px #111111;">(0.995) [c8o] Method call: call</span>
</div>
<div style="position:absolute;left:9px;top:686px;width:1545px;height:40px;background:#c6ecfc;border-bottom:1px solid #adccd9;border-radius:0 0 6px 6px;overflow:hidden">
<span style="position:absolute;left:1.10px;top:3.00px;font-family:'Liberation Sans',sans-serif;font-weight:normal;font-size:12px;line-height:12px;color:#5d5d5d;white-space:pre;letter-spacing:1.078px;">2026-02-24</span>
<span style="position:absolute;left:87.10px;top:3.00px;font-family:'Liberation Sans',sans-serif;font-weight:normal;font-size:12px;line-height:12px;color:#5d5d5d;white-space:pre;letter-spacing:0.870px;">17:47:34,936</span>
<span style="position:absolute;left:178.20px;top:3.00px;font-family:'Liberation Sans',sans-serif;font-weight:normal;font-size:12px;line-height:12px;color:#5d5d5d;white-space:pre;letter-spacing:0.556px;">0ms</span>
<span style="position:absolute;left:223.80px;top:3.00px;font-family:'Liberation Sans',sans-serif;font-weight:normal;font-size:12px;line-height:12px;color:#5d5d5d;white-space:pre;letter-spacing:0.258px;">Devices</span>
<span style="position:absolute;left:335.10px;top:3.00px;font-family:'Liberation Sans',sans-serif;font-weight:normal;font-size:12px;line-height:12px;color:#5d5d5d;white-space:pre;letter-spacing:0.845px;">http-nio-18080-exec-11</span>
<span style="position:absolute;left:536.00px;top:3.00px;font-family:'Liberation Sans',sans-serif;font-weight:normal;font-size:12px;line-height:12px;color:#5d5d5d;white-space:pre;letter-spacing:0.658px;">c8o:admin</span>
<span style="position:absolute;left:637.30px;top:3.00px;font-family:'Liberation Sans',sans-serif;font-weight:normal;font-size:12px;line-height:12px;color:#5d5d5d;white-space:pre;letter-spacing:0.503px;">sample_HelloWorld</span>
<span style="position:absolute;left:1065.20px;top:3.00px;font-family:'Liberation Sans',sans-serif;font-weight:normal;font-size:12px;line-height:12px;color:#5d5d5d;white-space:pre;letter-spacing:0.546px;">A7EFD5F148F9E2ED528064DF7064563A</span>
<div style="position:absolute;left:1344.10px;top:0;width:78.3px;height:20px;overflow:hidden"><span style="position:absolute;left:0.00px;top:3.00px;font-family:'Liberation Sans',sans-serif;font-weight:normal;font-size:12px;line-height:12px;color:#5d5d5d;white-space:pre;letter-spacing:0.788px;">D1JMAI2I</span></div>
<div style="position:absolute;left:1423.90px;top:0;width:99.2px;height:20px;overflow:hidden"><span style="position:absolute;left:0.00px;top:3.00px;font-family:'Liberation Sans',sans-serif;font-weight:normal;font-size:12px;line-height:12px;color:#5d5d5d;white-space:pre;letter-spacing:0.406px;">WEB-B7548CD6-</span></div>
<span style="position:absolute;left:3.80px;top:22.50px;font-family:'Liberation Mono',monospace;font-weight:normal;font-size:12.87px;line-height:12.87px;color:#111111;white-space:pre;-webkit-text-stroke:0.08px #111111;">(0.995) [c8o] Method call: C8oCallTask</span>
</div>
<div style="position:absolute;left:9px;top:726px;width:1545px;height:39px;background:#d0f0fd;border-bottom:1px solid #adccd9;border-radius:0 0 6px 6px;overflow:hidden">
<span style="position:absolute;left:1.10px;top:2.00px;font-family:'Liberation Sans',sans-serif;font-weight:normal;font-size:12px;line-height:12px;color:#5d5d5d;white-space:pre;letter-spacing:1.078px;">2026-02-24</span>
<span style="position:absolute;left:87.10px;top:2.00px;font-family:'Liberation Sans',sans-serif;font-weight:normal;font-size:12px;line-height:12px;color:#5d5d5d;white-space:pre;letter-spacing:0.870px;">17:47:34,936</span>
<span style="position:absolute;left:178.20px;top:2.00px;font-family:'Liberation Sans',sans-serif;font-weight:normal;font-size:12px;line-height:12px;color:#5d5d5d;white-space:pre;letter-spacing:0.556px;">0ms</span>
<span style="position:absolute;left:223.80px;top:2.00px;font-family:'Liberation Sans',sans-serif;font-weight:normal;font-size:12px;line-height:12px;color:#5d5d5d;white-space:pre;letter-spacing:0.258px;">Devices</span>
<span style="position:absolute;left:335.10px;top:2.00px;font-family:'Liberation Sans',sans-serif;font-weight:normal;font-size:12px;line-height:12px;color:#5d5d5d;white-space:pre;letter-spacing:0.845px;">http-nio-18080-exec-11</span>
<span style="position:absolute;left:536.00px;top:2.00px;font-family:'Liberation Sans',sans-serif;font-weight:normal;font-size:12px;line-height:12px;color:#5d5d5d;white-space:pre;letter-spacing:0.658px;">c8o:admin</span>
<span style="position:absolute;left:637.30px;top:2.00px;font-family:'Liberation Sans',sans-serif;font-weight:normal;font-size:12px;line-height:12px;color:#5d5d5d;white-space:pre;letter-spacing:0.503px;">sample_HelloWorld</span>
<span style="position:absolute;left:1065.20px;top:2.00px;font-family:'Liberation Sans',sans-serif;font-weight:normal;font-size:12px;line-height:12px;color:#5d5d5d;white-space:pre;letter-spacing:0.546px;">A7EFD5F148F9E2ED528064DF7064563A</span>
<div style="position:absolute;left:1344.10px;top:0;width:78.3px;height:20px;overflow:hidden"><span style="position:absolute;left:0.00px;top:2.00px;font-family:'Liberation Sans',sans-serif;font-weight:normal;font-size:12px;line-height:12px;color:#5d5d5d;white-space:pre;letter-spacing:0.788px;">D1JMAI2I</span></div>
<div style="position:absolute;left:1423.90px;top:0;width:99.2px;height:20px;overflow:hidden"><span style="position:absolute;left:0.00px;top:2.00px;font-family:'Liberation Sans',sans-serif;font-weight:normal;font-size:12px;line-height:12px;color:#5d5d5d;white-space:pre;letter-spacing:0.406px;">WEB-B7548CD6-</span></div>
<span style="position:absolute;left:3.80px;top:22.50px;font-family:'Liberation Mono',monospace;font-weight:normal;font-size:12.87px;line-height:12.87px;color:#111111;white-space:pre;-webkit-text-stroke:0.08px #111111;">(1.009) [MB] Toast displayed: &quot;fetching data …&quot;</span>
</div>
<div style="position:absolute;left:9px;top:765px;width:1545px;height:40px;background:#c6ecfc;border-bottom:1px solid #adccd9;border-radius:0 0 6px 6px;overflow:hidden">
<span style="position:absolute;left:1.10px;top:3.00px;font-family:'Liberation Sans',sans-serif;font-weight:normal;font-size:12px;line-height:12px;color:#5d5d5d;white-space:pre;letter-spacing:1.078px;">2026-02-24</span>
<span style="position:absolute;left:87.10px;top:3.00px;font-family:'Liberation Sans',sans-serif;font-weight:normal;font-size:12px;line-height:12px;color:#5d5d5d;white-space:pre;letter-spacing:0.870px;">17:47:34,936</span>
<span style="position:absolute;left:178.20px;top:3.00px;font-family:'Liberation Sans',sans-serif;font-weight:normal;font-size:12px;line-height:12px;color:#5d5d5d;white-space:pre;letter-spacing:0.556px;">0ms</span>
<span style="position:absolute;left:223.80px;top:3.00px;font-family:'Liberation Sans',sans-serif;font-weight:normal;font-size:12px;line-height:12px;color:#5d5d5d;white-space:pre;letter-spacing:0.258px;">Devices</span>
<span style="position:absolute;left:335.10px;top:3.00px;font-family:'Liberation Sans',sans-serif;font-weight:normal;font-size:12px;line-height:12px;color:#5d5d5d;white-space:pre;letter-spacing:0.845px;">http-nio-18080-exec-11</span>
<span style="position:absolute;left:536.00px;top:3.00px;font-family:'Liberation Sans',sans-serif;font-weight:normal;font-size:12px;line-height:12px;color:#5d5d5d;white-space:pre;letter-spacing:0.658px;">c8o:admin</span>
<span style="position:absolute;left:637.30px;top:3.00px;font-family:'Liberation Sans',sans-serif;font-weight:normal;font-size:12px;line-height:12px;color:#5d5d5d;white-space:pre;letter-spacing:0.503px;">sample_HelloWorld</span>
<span style="position:absolute;left:1065.20px;top:3.00px;font-family:'Liberation Sans',sans-serif;font-weight:normal;font-size:12px;line-height:12px;color:#5d5d5d;white-space:pre;letter-spacing:0.546px;">A7EFD5F148F9E2ED528064DF7064563A</span>
<div style="position:absolute;left:1344.10px;top:0;width:78.3px;height:20px;overflow:hidden"><span style="position:absolute;left:0.00px;top:3.00px;font-family:'Liberation Sans',sans-serif;font-weight:normal;font-size:12px;line-height:12px;color:#5d5d5d;white-space:pre;letter-spacing:0.788px;">D1JMAI2I</span></div>
<div style="position:absolute;left:1423.90px;top:0;width:99.2px;height:20px;overflow:hidden"><span style="position:absolute;left:0.00px;top:3.00px;font-family:'Liberation Sans',sans-serif;font-weight:normal;font-size:12px;line-height:12px;color:#5d5d5d;white-space:pre;letter-spacing:0.406px;">WEB-B7548CD6-</span></div>
<span style="position:absolute;left:3.80px;top:23.50px;font-family:'Liberation Mono',monospace;font-weight:normal;font-size:12.87px;line-height:12.87px;color:#111111;white-space:pre;-webkit-text-stroke:0.08px #111111;">(1.239) [MB] CallSequence[ATS1514381726265]: ended</span>
</div>
<div style="position:absolute;left:9px;top:247px;width:1545px;height:18px;background:#fff"></div>
<div style="position:absolute;left:8px;top:246px;width:1562px;height:40px;border:1px solid #dce8fb;border-bottom:none;border-radius:6px 6px 0 0"></div>
<span style="position:absolute;left:10.10px;top:249.20px;font-family:'Liberation Sans',sans-serif;font-weight:bold;font-size:13px;line-height:13px;color:#0d2546;white-space:pre;letter-spacing:-0.362px;">Date</span>
<span style="position:absolute;left:96.10px;top:249.20px;font-family:'Liberation Sans',sans-serif;font-weight:bold;font-size:13px;line-height:13px;color:#0d2546;white-space:pre;letter-spacing:-0.592px;">Time</span>
<span style="position:absolute;left:187.20px;top:249.20px;font-family:'Liberation Sans',sans-serif;font-weight:bold;font-size:13px;line-height:13px;color:#0d2546;white-space:pre;letter-spacing:-0.369px;">Delta</span>
<span style="position:absolute;left:232.80px;top:249.20px;font-family:'Liberation Sans',sans-serif;font-weight:bold;font-size:13px;line-height:13px;color:#0d2546;white-space:pre;letter-spacing:-0.539px;">Category</span>
<span style="position:absolute;left:344.10px;top:249.20px;font-family:'Liberation Sans',sans-serif;font-weight:bold;font-size:13px;line-height:13px;color:#0d2546;white-space:pre;letter-spacing:-0.575px;">Thread</span>
<span style="position:absolute;left:545.00px;top:249.20px;font-family:'Liberation Sans',sans-serif;font-weight:bold;font-size:13px;line-height:13px;color:#0d2546;white-space:pre;letter-spacing:-0.700px;">user</span>
<span style="position:absolute;left:646.30px;top:249.20px;font-family:'Liberation Sans',sans-serif;font-weight:bold;font-size:13px;line-height:13px;color:#0d2546;white-space:pre;letter-spacing:-0.496px;">project</span>
<span style="position:absolute;left:771.00px;top:249.20px;font-family:'Liberation Sans',sans-serif;font-weight:bold;font-size:13px;line-height:13px;color:#0d2546;white-space:pre;letter-spacing:-0.523px;">sequence</span>
<span style="position:absolute;left:872.00px;top:249.20px;font-family:'Liberation Sans',sans-serif;font-weight:bold;font-size:13px;line-height:13px;color:#0d2546;white-space:pre;letter-spacing:-0.509px;">connector</span>
<span style="position:absolute;left:973.50px;top:249.20px;font-family:'Liberation Sans',sans-serif;font-weight:bold;font-size:13px;line-height:13px;color:#0d2546;white-space:pre;letter-spacing:-0.412px;">transaction</span>
<span style="position:absolute;left:1074.20px;top:249.20px;font-family:'Liberation Sans',sans-serif;font-weight:bold;font-size:13px;line-height:13px;color:#0d2546;white-space:pre;letter-spacing:-0.377px;">contextid</span>
<span style="position:absolute;left:1353.10px;top:249.20px;font-family:'Liberation Sans',sans-serif;font-weight:bold;font-size:13px;line-height:13px;color:#0d2546;white-space:pre;letter-spacing:-0.850px;">uid</span>
<span style="position:absolute;left:1432.90px;top:249.20px;font-family:'Liberation Sans',sans-serif;font-weight:bold;font-size:13px;line-height:13px;color:#0d2546;white-space:pre;letter-spacing:-0.712px;">uuid</span>
<span style="position:absolute;left:32.40px;top:818.00px;font-family:'Liberation Sans',sans-serif;font-weight:normal;font-size:13px;line-height:13px;color:#1c1c1c;white-space:pre;letter-spacing:0.153px;">Lines 98-112 of 112 [1140 w/o filter] Calling...</span>
<svg style="position:absolute;left:1347px;top:817px" width="17" height="16" viewBox="0 0 17 16"><path d="M8.5 3L13.6 8.4H10.9V13.9H6.1V8.4H3.4z" fill="none" stroke="#22c5fd" stroke-width="1.4" stroke-linejoin="round"/></svg>
<svg style="position:absolute;left:1381px;top:817px" width="17" height="16" viewBox="0 0 17 16"><path d="M8.5 13.9L13.6 8.5H10.9V3H6.1V8.5H3.4z" fill="none" stroke="#22c5fd" stroke-width="1.4" stroke-linejoin="round"/></svg>
<div style="position:absolute;left:1411px;top:809px;width:135px;height:31px;background:#22c5fd;border-radius:5px"></div>
<span style="position:absolute;left:1414.60px;top:818.00px;font-family:'Liberation Sans',sans-serif;font-weight:normal;font-size:13px;line-height:13px;color:#ffffff;white-space:pre;letter-spacing:-0.066px;">Enabled auto tail</span>
<svg style="position:absolute;left:1521px;top:813px" width="22" height="23" viewBox="0 0 22 23"><path d="M7.5 3V9.5H5L9.5 14.5L14 9.5H11.5V3z" fill="none" stroke="#fff" stroke-width="1.4" stroke-linejoin="round"/><rect x="3" y="17" width="9" height="1.3" fill="#fff"/><rect x="13.5" y="15" width="6.5" height="5.8" rx=".8" fill="#fff"/><path d="M14.8 15.2V13.6a1.95 1.95 0 0 1 3.9 0V15.2" fill="none" stroke="#fff" stroke-width="1.2"/></svg>
<div style="position:absolute;left:1558px;top:782px;width:8px;height:20px;background:#cddde6;border-radius:4px"></div></body></html>
